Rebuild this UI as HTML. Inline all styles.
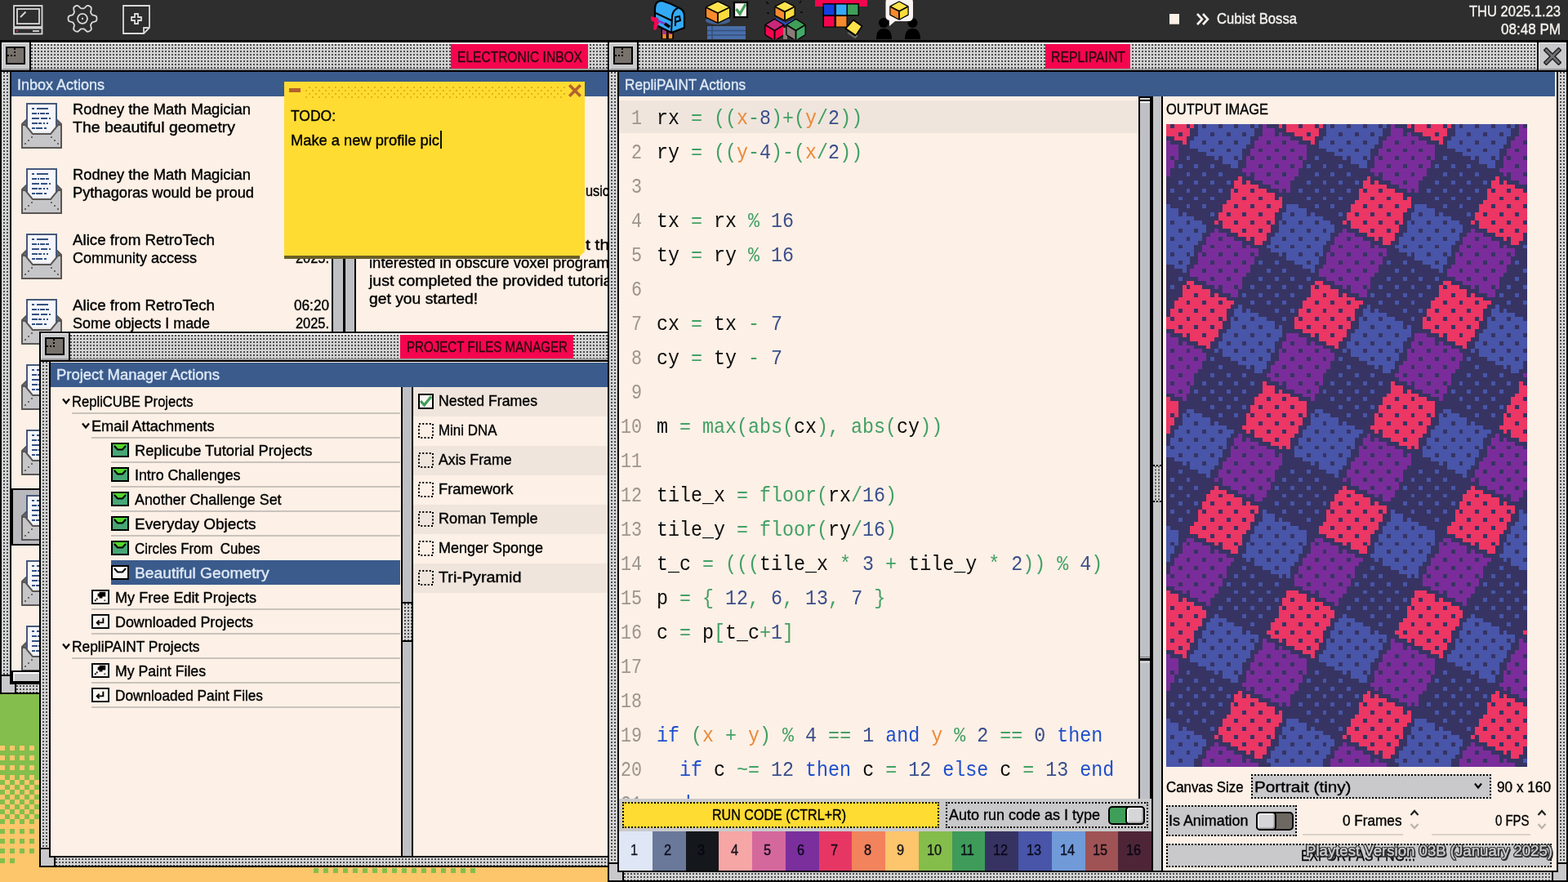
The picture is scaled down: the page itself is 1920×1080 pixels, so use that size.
<!DOCTYPE html>
<html lang="en"><head><meta charset="utf-8"><title>RepliPAINT desktop</title>
<style>
html,body{margin:0;padding:0;background:#2d2d2d;}
body{width:1920px;height:1080px;overflow:hidden;position:relative;font-family:'Liberation Sans',sans-serif;}
#root{position:absolute;left:0;top:0;width:1920px;height:1080px;overflow:hidden;}
#root div,#root span.t,#root svg{position:absolute;box-sizing:border-box;}
#root span.t{white-space:pre;display:block;-webkit-text-stroke:0.4px currentColor;}
#root{filter:blur(0.4px);}
.clip{overflow:hidden;}
</style></head>
<body><div id="root">
<div style="left:0px;top:0px;width:1920px;height:1080px;background:#84be4c;"></div>
<div style="left:0px;top:913px;width:760px;height:36px;background:conic-gradient(from 0deg at 50% 50%, transparent 75%, #fdc66b 0) 0px 0px/12px 12px;"></div>
<div style="left:0px;top:949px;width:760px;height:54px;background:conic-gradient(from 0deg at 50% 50%, #84be4c 25%, #fdc66b 0 50%, #84be4c 0 75%, #fdc66b 0) 0 0/12px 12px;"></div>
<div style="left:0px;top:1003px;width:760px;height:77px;background:#fdc66b;"></div>
<div style="left:0px;top:1003px;width:760px;height:54px;background:conic-gradient(from 0deg at 50% 50%, transparent 50%, #84be4c 0 75%, transparent 0) 0px -6px/12px 12px;"></div>
<div style="left:24px;top:1051px;width:30px;height:6px;background:#fdc66b;"></div>
<div style="left:384px;top:1063px;width:198px;height:6px;background:conic-gradient(from 0deg at 50% 50%, transparent 50%, #84be4c 0 75%, transparent 0) 0px -6px/12px 12px;"></div>
<div style="left:0px;top:50px;width:900px;height:800px;background:#000;"></div>
<div style="left:2px;top:52px;width:896px;height:34px;background:conic-gradient(from 0deg at 50% 50%, #4e4e4e 25%, #d3d3d3 0) 2px 2px/4px 4px;"></div>
<div style="left:2px;top:52px;width:896px;height:1.5px;background:#f4f4f4;"></div>
<div style="left:2px;top:84px;width:896px;height:2px;background:#9a9a9c;"></div>
<div style="left:2px;top:52px;width:34px;height:34px;background:#c9c9cb;border-top:1.5px solid #fff;border-left:1.5px solid #eee;border-bottom:2px solid #9a9a9c;"></div>
<div style="left:36px;top:52px;width:2px;height:34px;background:#000;"></div>
<div style="left:7px;top:57px;width:24px;height:22px;background:#78726c;border:2px solid #000;"></div>
<div style="left:17px;top:59px;width:2px;height:2px;background:#000;"></div>
<div style="left:17px;top:63px;width:2px;height:2px;background:#000;"></div>
<div style="left:17px;top:67px;width:2px;height:2px;background:#000;"></div>
<div style="left:13px;top:67px;width:2px;height:2px;background:#000;"></div>
<div style="left:9px;top:67px;width:2px;height:2px;background:#000;"></div>
<div style="left:552px;top:54px;width:168px;height:30px;background:#f5054e;"></div>
<span class="t" style="left:559.50px;top:60.42px;font-size:19px;line-height:19px;color:#2a0a12;font-family:'Liberation Sans', sans-serif;transform:scale(0.8187,1);transform-origin:0 16.08px;">ELECTRONIC INBOX</span>
<div style="left:2px;top:88px;width:10px;height:760px;background:conic-gradient(from 0deg at 50% 50%, #4e4e4e 25%, #d3d3d3 0) 0px 0px/4px 4px;"></div>
<div style="left:888px;top:88px;width:10px;height:760px;background:conic-gradient(from 0deg at 50% 50%, #4e4e4e 25%, #d3d3d3 0) 0px 0px/4px 4px;"></div>
<div style="left:2px;top:838px;width:896px;height:10px;background:conic-gradient(from 0deg at 50% 50%, #4e4e4e 25%, #d3d3d3 0) 0px 1px/4px 4px;"></div>
<div style="left:12px;top:88px;width:876px;height:750px;background:#000;"></div>
<div style="left:14px;top:88px;width:872px;height:748px;background:#fdf0e6;"></div>
<div style="left:2px;top:826px;width:10px;height:22px;background:#c9c9cb;border-top:2px solid #000;"></div>
<div style="left:2px;top:838px;width:18px;height:10px;background:#c9c9cb;border-right:2px solid #000;"></div>
<div style="left:14px;top:88px;width:886px;height:30px;background:#3a5b8c;"></div>
<span class="t" style="left:21.00px;top:93.92px;font-size:19px;line-height:19px;color:#dfe9f5;font-family:'Liberation Sans', sans-serif;transform:scale(0.9466,1);transform-origin:0 16.08px;">Inbox Actions</span>
<div style="left:14px;top:598px;width:40px;height:70px;background:#b9b9bd;border:2px solid #000;border-right:none;"></div>
<svg style="left:26px;top:126px" width="50" height="56" viewBox="0 0 50 56"><path d="M1 26 L6 21 L44 21 L49 26 L49 55 L1 55 Z" fill="#6c6866" stroke="#5a5654" stroke-width="2"/><rect x="7" y="1" width="36" height="42" fill="#f4f6fb" stroke="#46597c" stroke-width="2"/><rect x="13" y="6" width="3" height="2" fill="#34507f"/><rect x="19" y="6" width="14" height="2" fill="#34507f"/><rect x="13" y="12" width="6" height="2" fill="#34507f"/><rect x="20" y="12" width="2" height="2" fill="#34507f"/><rect x="23" y="12" width="6" height="2" fill="#34507f"/><rect x="30" y="12" width="4" height="2" fill="#34507f"/><rect x="13" y="18" width="9" height="2" fill="#34507f"/><rect x="24" y="18" width="8" height="2" fill="#34507f"/><rect x="34" y="18" width="2" height="2" fill="#34507f"/><rect x="13" y="24" width="7" height="2" fill="#34507f"/><rect x="21" y="24" width="4" height="2" fill="#34507f"/><rect x="27" y="24" width="2" height="2" fill="#34507f"/><rect x="31" y="24" width="2" height="2" fill="#34507f"/><rect x="13" y="30" width="4" height="2" fill="#34507f"/><rect x="18" y="30" width="8" height="2" fill="#34507f"/><rect x="28" y="30" width="3" height="2" fill="#34507f"/><path d="M1 27 L5 27 L14 38 L36 38 L45 27 L49 27 L49 55 L1 55 Z" fill="#c6c6c9" stroke="#5a5654" stroke-width="2" stroke-linejoin="miter"/><path d="M14 36 L36 36" stroke="#e9e9ee" stroke-width="2"/><rect x="12" y="41" width="2" height="2" fill="#6a6664"/><rect x="8" y="45" width="2" height="2" fill="#6a6664"/><rect x="4" y="49" width="2" height="2" fill="#6a6664"/><rect x="36" y="41" width="2" height="2" fill="#6a6664"/><rect x="40" y="45" width="2" height="2" fill="#6a6664"/><rect x="44" y="49" width="2" height="2" fill="#6a6664"/></svg>
<span class="t" style="left:89.00px;top:123.92px;font-size:19px;line-height:19px;color:#000;font-family:'Liberation Sans', sans-serif;transform:scale(0.9645,1);transform-origin:0 16.08px;">Rodney the Math Magician</span>
<span class="t" style="left:89.00px;top:145.92px;font-size:19px;line-height:19px;color:#000;font-family:'Liberation Sans', sans-serif;transform:scale(1.0240,1);transform-origin:0 16.08px;">The beautiful geometry</span>
<svg style="left:26px;top:206px" width="50" height="56" viewBox="0 0 50 56"><path d="M1 26 L6 21 L44 21 L49 26 L49 55 L1 55 Z" fill="#6c6866" stroke="#5a5654" stroke-width="2"/><rect x="7" y="1" width="36" height="42" fill="#f4f6fb" stroke="#46597c" stroke-width="2"/><rect x="13" y="6" width="3" height="2" fill="#34507f"/><rect x="19" y="6" width="14" height="2" fill="#34507f"/><rect x="13" y="12" width="6" height="2" fill="#34507f"/><rect x="20" y="12" width="2" height="2" fill="#34507f"/><rect x="23" y="12" width="6" height="2" fill="#34507f"/><rect x="30" y="12" width="4" height="2" fill="#34507f"/><rect x="13" y="18" width="9" height="2" fill="#34507f"/><rect x="24" y="18" width="8" height="2" fill="#34507f"/><rect x="34" y="18" width="2" height="2" fill="#34507f"/><rect x="13" y="24" width="7" height="2" fill="#34507f"/><rect x="21" y="24" width="4" height="2" fill="#34507f"/><rect x="27" y="24" width="2" height="2" fill="#34507f"/><rect x="31" y="24" width="2" height="2" fill="#34507f"/><rect x="13" y="30" width="4" height="2" fill="#34507f"/><rect x="18" y="30" width="8" height="2" fill="#34507f"/><rect x="28" y="30" width="3" height="2" fill="#34507f"/><path d="M1 27 L5 27 L14 38 L36 38 L45 27 L49 27 L49 55 L1 55 Z" fill="#c6c6c9" stroke="#5a5654" stroke-width="2" stroke-linejoin="miter"/><path d="M14 36 L36 36" stroke="#e9e9ee" stroke-width="2"/><rect x="12" y="41" width="2" height="2" fill="#6a6664"/><rect x="8" y="45" width="2" height="2" fill="#6a6664"/><rect x="4" y="49" width="2" height="2" fill="#6a6664"/><rect x="36" y="41" width="2" height="2" fill="#6a6664"/><rect x="40" y="45" width="2" height="2" fill="#6a6664"/><rect x="44" y="49" width="2" height="2" fill="#6a6664"/></svg>
<span class="t" style="left:89.00px;top:203.92px;font-size:19px;line-height:19px;color:#000;font-family:'Liberation Sans', sans-serif;transform:scale(0.9645,1);transform-origin:0 16.08px;">Rodney the Math Magician</span>
<span class="t" style="left:89.00px;top:225.92px;font-size:19px;line-height:19px;color:#000;font-family:'Liberation Sans', sans-serif;transform:scale(0.9597,1);transform-origin:0 16.08px;">Pythagoras would be proud</span>
<svg style="left:26px;top:286px" width="50" height="56" viewBox="0 0 50 56"><path d="M1 26 L6 21 L44 21 L49 26 L49 55 L1 55 Z" fill="#6c6866" stroke="#5a5654" stroke-width="2"/><rect x="7" y="1" width="36" height="42" fill="#f4f6fb" stroke="#46597c" stroke-width="2"/><rect x="13" y="6" width="3" height="2" fill="#34507f"/><rect x="19" y="6" width="14" height="2" fill="#34507f"/><rect x="13" y="12" width="6" height="2" fill="#34507f"/><rect x="20" y="12" width="2" height="2" fill="#34507f"/><rect x="23" y="12" width="6" height="2" fill="#34507f"/><rect x="30" y="12" width="4" height="2" fill="#34507f"/><rect x="13" y="18" width="9" height="2" fill="#34507f"/><rect x="24" y="18" width="8" height="2" fill="#34507f"/><rect x="34" y="18" width="2" height="2" fill="#34507f"/><rect x="13" y="24" width="7" height="2" fill="#34507f"/><rect x="21" y="24" width="4" height="2" fill="#34507f"/><rect x="27" y="24" width="2" height="2" fill="#34507f"/><rect x="31" y="24" width="2" height="2" fill="#34507f"/><rect x="13" y="30" width="4" height="2" fill="#34507f"/><rect x="18" y="30" width="8" height="2" fill="#34507f"/><rect x="28" y="30" width="3" height="2" fill="#34507f"/><path d="M1 27 L5 27 L14 38 L36 38 L45 27 L49 27 L49 55 L1 55 Z" fill="#c6c6c9" stroke="#5a5654" stroke-width="2" stroke-linejoin="miter"/><path d="M14 36 L36 36" stroke="#e9e9ee" stroke-width="2"/><rect x="12" y="41" width="2" height="2" fill="#6a6664"/><rect x="8" y="45" width="2" height="2" fill="#6a6664"/><rect x="4" y="49" width="2" height="2" fill="#6a6664"/><rect x="36" y="41" width="2" height="2" fill="#6a6664"/><rect x="40" y="45" width="2" height="2" fill="#6a6664"/><rect x="44" y="49" width="2" height="2" fill="#6a6664"/></svg>
<span class="t" style="left:89.00px;top:283.92px;font-size:19px;line-height:19px;color:#000;font-family:'Liberation Sans', sans-serif;transform:scale(0.9867,1);transform-origin:0 16.08px;">Alice from RetroTech</span>
<span class="t" style="left:89.00px;top:305.92px;font-size:19px;line-height:19px;color:#000;font-family:'Liberation Sans', sans-serif;transform:scale(0.9470,1);transform-origin:0 16.08px;">Community access</span>
<span class="t" style="left:359.50px;top:283.92px;font-size:19px;line-height:19px;color:#000;font-family:'Liberation Sans', sans-serif;transform:scale(0.9044,1);transform-origin:0 16.08px;">06:20</span>
<span class="t" style="left:361.50px;top:305.92px;font-size:19px;line-height:19px;color:#000;font-family:'Liberation Sans', sans-serif;transform:scale(0.8623,1);transform-origin:0 16.08px;">2025.</span>
<svg style="left:26px;top:366px" width="50" height="56" viewBox="0 0 50 56"><path d="M1 26 L6 21 L44 21 L49 26 L49 55 L1 55 Z" fill="#6c6866" stroke="#5a5654" stroke-width="2"/><rect x="7" y="1" width="36" height="42" fill="#f4f6fb" stroke="#46597c" stroke-width="2"/><rect x="13" y="6" width="3" height="2" fill="#34507f"/><rect x="19" y="6" width="14" height="2" fill="#34507f"/><rect x="13" y="12" width="6" height="2" fill="#34507f"/><rect x="20" y="12" width="2" height="2" fill="#34507f"/><rect x="23" y="12" width="6" height="2" fill="#34507f"/><rect x="30" y="12" width="4" height="2" fill="#34507f"/><rect x="13" y="18" width="9" height="2" fill="#34507f"/><rect x="24" y="18" width="8" height="2" fill="#34507f"/><rect x="34" y="18" width="2" height="2" fill="#34507f"/><rect x="13" y="24" width="7" height="2" fill="#34507f"/><rect x="21" y="24" width="4" height="2" fill="#34507f"/><rect x="27" y="24" width="2" height="2" fill="#34507f"/><rect x="31" y="24" width="2" height="2" fill="#34507f"/><rect x="13" y="30" width="4" height="2" fill="#34507f"/><rect x="18" y="30" width="8" height="2" fill="#34507f"/><rect x="28" y="30" width="3" height="2" fill="#34507f"/><path d="M1 27 L5 27 L14 38 L36 38 L45 27 L49 27 L49 55 L1 55 Z" fill="#c6c6c9" stroke="#5a5654" stroke-width="2" stroke-linejoin="miter"/><path d="M14 36 L36 36" stroke="#e9e9ee" stroke-width="2"/><rect x="12" y="41" width="2" height="2" fill="#6a6664"/><rect x="8" y="45" width="2" height="2" fill="#6a6664"/><rect x="4" y="49" width="2" height="2" fill="#6a6664"/><rect x="36" y="41" width="2" height="2" fill="#6a6664"/><rect x="40" y="45" width="2" height="2" fill="#6a6664"/><rect x="44" y="49" width="2" height="2" fill="#6a6664"/></svg>
<span class="t" style="left:89.00px;top:363.92px;font-size:19px;line-height:19px;color:#000;font-family:'Liberation Sans', sans-serif;transform:scale(0.9867,1);transform-origin:0 16.08px;">Alice from RetroTech</span>
<span class="t" style="left:89.00px;top:385.92px;font-size:19px;line-height:19px;color:#000;font-family:'Liberation Sans', sans-serif;transform:scale(0.9413,1);transform-origin:0 16.08px;">Some objects I made</span>
<span class="t" style="left:359.50px;top:363.92px;font-size:19px;line-height:19px;color:#000;font-family:'Liberation Sans', sans-serif;transform:scale(0.9044,1);transform-origin:0 16.08px;">06:20</span>
<span class="t" style="left:361.50px;top:385.92px;font-size:19px;line-height:19px;color:#000;font-family:'Liberation Sans', sans-serif;transform:scale(0.8623,1);transform-origin:0 16.08px;">2025.</span>
<svg style="left:26px;top:446px" width="50" height="56" viewBox="0 0 50 56"><path d="M1 26 L6 21 L44 21 L49 26 L49 55 L1 55 Z" fill="#6c6866" stroke="#5a5654" stroke-width="2"/><rect x="7" y="1" width="36" height="42" fill="#f4f6fb" stroke="#46597c" stroke-width="2"/><rect x="13" y="6" width="3" height="2" fill="#34507f"/><rect x="19" y="6" width="14" height="2" fill="#34507f"/><rect x="13" y="12" width="6" height="2" fill="#34507f"/><rect x="20" y="12" width="2" height="2" fill="#34507f"/><rect x="23" y="12" width="6" height="2" fill="#34507f"/><rect x="30" y="12" width="4" height="2" fill="#34507f"/><rect x="13" y="18" width="9" height="2" fill="#34507f"/><rect x="24" y="18" width="8" height="2" fill="#34507f"/><rect x="34" y="18" width="2" height="2" fill="#34507f"/><rect x="13" y="24" width="7" height="2" fill="#34507f"/><rect x="21" y="24" width="4" height="2" fill="#34507f"/><rect x="27" y="24" width="2" height="2" fill="#34507f"/><rect x="31" y="24" width="2" height="2" fill="#34507f"/><rect x="13" y="30" width="4" height="2" fill="#34507f"/><rect x="18" y="30" width="8" height="2" fill="#34507f"/><rect x="28" y="30" width="3" height="2" fill="#34507f"/><path d="M1 27 L5 27 L14 38 L36 38 L45 27 L49 27 L49 55 L1 55 Z" fill="#c6c6c9" stroke="#5a5654" stroke-width="2" stroke-linejoin="miter"/><path d="M14 36 L36 36" stroke="#e9e9ee" stroke-width="2"/><rect x="12" y="41" width="2" height="2" fill="#6a6664"/><rect x="8" y="45" width="2" height="2" fill="#6a6664"/><rect x="4" y="49" width="2" height="2" fill="#6a6664"/><rect x="36" y="41" width="2" height="2" fill="#6a6664"/><rect x="40" y="45" width="2" height="2" fill="#6a6664"/><rect x="44" y="49" width="2" height="2" fill="#6a6664"/></svg>
<svg style="left:26px;top:526px" width="50" height="56" viewBox="0 0 50 56"><path d="M1 26 L6 21 L44 21 L49 26 L49 55 L1 55 Z" fill="#6c6866" stroke="#5a5654" stroke-width="2"/><rect x="7" y="1" width="36" height="42" fill="#f4f6fb" stroke="#46597c" stroke-width="2"/><rect x="13" y="6" width="3" height="2" fill="#34507f"/><rect x="19" y="6" width="14" height="2" fill="#34507f"/><rect x="13" y="12" width="6" height="2" fill="#34507f"/><rect x="20" y="12" width="2" height="2" fill="#34507f"/><rect x="23" y="12" width="6" height="2" fill="#34507f"/><rect x="30" y="12" width="4" height="2" fill="#34507f"/><rect x="13" y="18" width="9" height="2" fill="#34507f"/><rect x="24" y="18" width="8" height="2" fill="#34507f"/><rect x="34" y="18" width="2" height="2" fill="#34507f"/><rect x="13" y="24" width="7" height="2" fill="#34507f"/><rect x="21" y="24" width="4" height="2" fill="#34507f"/><rect x="27" y="24" width="2" height="2" fill="#34507f"/><rect x="31" y="24" width="2" height="2" fill="#34507f"/><rect x="13" y="30" width="4" height="2" fill="#34507f"/><rect x="18" y="30" width="8" height="2" fill="#34507f"/><rect x="28" y="30" width="3" height="2" fill="#34507f"/><path d="M1 27 L5 27 L14 38 L36 38 L45 27 L49 27 L49 55 L1 55 Z" fill="#c6c6c9" stroke="#5a5654" stroke-width="2" stroke-linejoin="miter"/><path d="M14 36 L36 36" stroke="#e9e9ee" stroke-width="2"/><rect x="12" y="41" width="2" height="2" fill="#6a6664"/><rect x="8" y="45" width="2" height="2" fill="#6a6664"/><rect x="4" y="49" width="2" height="2" fill="#6a6664"/><rect x="36" y="41" width="2" height="2" fill="#6a6664"/><rect x="40" y="45" width="2" height="2" fill="#6a6664"/><rect x="44" y="49" width="2" height="2" fill="#6a6664"/></svg>
<svg style="left:26px;top:606px" width="50" height="56" viewBox="0 0 50 56"><path d="M1 26 L6 21 L44 21 L49 26 L49 55 L1 55 Z" fill="#6c6866" stroke="#5a5654" stroke-width="2"/><rect x="7" y="1" width="36" height="42" fill="#f4f6fb" stroke="#46597c" stroke-width="2"/><rect x="13" y="6" width="3" height="2" fill="#34507f"/><rect x="19" y="6" width="14" height="2" fill="#34507f"/><rect x="13" y="12" width="6" height="2" fill="#34507f"/><rect x="20" y="12" width="2" height="2" fill="#34507f"/><rect x="23" y="12" width="6" height="2" fill="#34507f"/><rect x="30" y="12" width="4" height="2" fill="#34507f"/><rect x="13" y="18" width="9" height="2" fill="#34507f"/><rect x="24" y="18" width="8" height="2" fill="#34507f"/><rect x="34" y="18" width="2" height="2" fill="#34507f"/><rect x="13" y="24" width="7" height="2" fill="#34507f"/><rect x="21" y="24" width="4" height="2" fill="#34507f"/><rect x="27" y="24" width="2" height="2" fill="#34507f"/><rect x="31" y="24" width="2" height="2" fill="#34507f"/><rect x="13" y="30" width="4" height="2" fill="#34507f"/><rect x="18" y="30" width="8" height="2" fill="#34507f"/><rect x="28" y="30" width="3" height="2" fill="#34507f"/><path d="M1 27 L5 27 L14 38 L36 38 L45 27 L49 27 L49 55 L1 55 Z" fill="#c6c6c9" stroke="#5a5654" stroke-width="2" stroke-linejoin="miter"/><path d="M14 36 L36 36" stroke="#e9e9ee" stroke-width="2"/><rect x="12" y="41" width="2" height="2" fill="#6a6664"/><rect x="8" y="45" width="2" height="2" fill="#6a6664"/><rect x="4" y="49" width="2" height="2" fill="#6a6664"/><rect x="36" y="41" width="2" height="2" fill="#6a6664"/><rect x="40" y="45" width="2" height="2" fill="#6a6664"/><rect x="44" y="49" width="2" height="2" fill="#6a6664"/></svg>
<svg style="left:26px;top:686px" width="50" height="56" viewBox="0 0 50 56"><path d="M1 26 L6 21 L44 21 L49 26 L49 55 L1 55 Z" fill="#6c6866" stroke="#5a5654" stroke-width="2"/><rect x="7" y="1" width="36" height="42" fill="#f4f6fb" stroke="#46597c" stroke-width="2"/><rect x="13" y="6" width="3" height="2" fill="#34507f"/><rect x="19" y="6" width="14" height="2" fill="#34507f"/><rect x="13" y="12" width="6" height="2" fill="#34507f"/><rect x="20" y="12" width="2" height="2" fill="#34507f"/><rect x="23" y="12" width="6" height="2" fill="#34507f"/><rect x="30" y="12" width="4" height="2" fill="#34507f"/><rect x="13" y="18" width="9" height="2" fill="#34507f"/><rect x="24" y="18" width="8" height="2" fill="#34507f"/><rect x="34" y="18" width="2" height="2" fill="#34507f"/><rect x="13" y="24" width="7" height="2" fill="#34507f"/><rect x="21" y="24" width="4" height="2" fill="#34507f"/><rect x="27" y="24" width="2" height="2" fill="#34507f"/><rect x="31" y="24" width="2" height="2" fill="#34507f"/><rect x="13" y="30" width="4" height="2" fill="#34507f"/><rect x="18" y="30" width="8" height="2" fill="#34507f"/><rect x="28" y="30" width="3" height="2" fill="#34507f"/><path d="M1 27 L5 27 L14 38 L36 38 L45 27 L49 27 L49 55 L1 55 Z" fill="#c6c6c9" stroke="#5a5654" stroke-width="2" stroke-linejoin="miter"/><path d="M14 36 L36 36" stroke="#e9e9ee" stroke-width="2"/><rect x="12" y="41" width="2" height="2" fill="#6a6664"/><rect x="8" y="45" width="2" height="2" fill="#6a6664"/><rect x="4" y="49" width="2" height="2" fill="#6a6664"/><rect x="36" y="41" width="2" height="2" fill="#6a6664"/><rect x="40" y="45" width="2" height="2" fill="#6a6664"/><rect x="44" y="49" width="2" height="2" fill="#6a6664"/></svg>
<svg style="left:26px;top:766px" width="50" height="56" viewBox="0 0 50 56"><path d="M1 26 L6 21 L44 21 L49 26 L49 55 L1 55 Z" fill="#6c6866" stroke="#5a5654" stroke-width="2"/><rect x="7" y="1" width="36" height="42" fill="#f4f6fb" stroke="#46597c" stroke-width="2"/><rect x="13" y="6" width="3" height="2" fill="#34507f"/><rect x="19" y="6" width="14" height="2" fill="#34507f"/><rect x="13" y="12" width="6" height="2" fill="#34507f"/><rect x="20" y="12" width="2" height="2" fill="#34507f"/><rect x="23" y="12" width="6" height="2" fill="#34507f"/><rect x="30" y="12" width="4" height="2" fill="#34507f"/><rect x="13" y="18" width="9" height="2" fill="#34507f"/><rect x="24" y="18" width="8" height="2" fill="#34507f"/><rect x="34" y="18" width="2" height="2" fill="#34507f"/><rect x="13" y="24" width="7" height="2" fill="#34507f"/><rect x="21" y="24" width="4" height="2" fill="#34507f"/><rect x="27" y="24" width="2" height="2" fill="#34507f"/><rect x="31" y="24" width="2" height="2" fill="#34507f"/><rect x="13" y="30" width="4" height="2" fill="#34507f"/><rect x="18" y="30" width="8" height="2" fill="#34507f"/><rect x="28" y="30" width="3" height="2" fill="#34507f"/><path d="M1 27 L5 27 L14 38 L36 38 L45 27 L49 27 L49 55 L1 55 Z" fill="#c6c6c9" stroke="#5a5654" stroke-width="2" stroke-linejoin="miter"/><path d="M14 36 L36 36" stroke="#e9e9ee" stroke-width="2"/><rect x="12" y="41" width="2" height="2" fill="#6a6664"/><rect x="8" y="45" width="2" height="2" fill="#6a6664"/><rect x="4" y="49" width="2" height="2" fill="#6a6664"/><rect x="36" y="41" width="2" height="2" fill="#6a6664"/><rect x="40" y="45" width="2" height="2" fill="#6a6664"/><rect x="44" y="49" width="2" height="2" fill="#6a6664"/></svg>
<div style="left:406px;top:118px;width:2px;height:720px;background:#000;"></div>
<div style="left:408px;top:118px;width:12px;height:720px;background:#bfc0c4;"></div>
<div style="left:420px;top:118px;width:3px;height:720px;background:#000;"></div>
<div style="left:423px;top:118px;width:11px;height:720px;background:#bfc0c4;"></div>
<div style="left:434px;top:118px;width:2px;height:720px;background:#000;"></div>
<span class="t" style="left:717.00px;top:224.12px;font-size:19px;line-height:19px;color:#000;font-family:'Liberation Sans', sans-serif;transform:scale(0.8581,1);transform-origin:0 16.08px;">usic</span>
<span class="t" style="left:717.00px;top:290.12px;font-size:19px;line-height:19px;color:#000;font-family:'Liberation Sans', sans-serif;transform:scale(1.0982,1);transform-origin:0 16.08px;">t th</span>
<span class="t" style="left:451.50px;top:312.42px;font-size:19px;line-height:19px;color:#000;font-family:'Liberation Sans', sans-serif;transform:scale(0.9731,1);transform-origin:0 16.08px;">interested in obscure voxel programming</span>
<span class="t" style="left:451.50px;top:334.42px;font-size:19px;line-height:19px;color:#000;font-family:'Liberation Sans', sans-serif;transform:scale(1.0249,1);transform-origin:0 16.08px;">just completed the provided tutorial</span>
<span class="t" style="left:451.50px;top:356.42px;font-size:19px;line-height:19px;color:#000;font-family:'Liberation Sans', sans-serif;transform:scale(1.0155,1);transform-origin:0 16.08px;">get you started!</span>
<div style="left:14px;top:821px;width:886px;height:17px;background:#000;"></div>
<div style="left:16px;top:823px;width:120px;height:11px;background:#c9c9cb;border-top:2px solid #fff;border-left:2px solid #eee;"></div>
<div style="left:50px;top:823px;width:850px;height:11px;background:#bfc0c4;"></div>
<div style="left:348px;top:103px;width:362px;height:213.5px;background:#6b5f25;"></div>
<div style="left:348px;top:100px;width:368px;height:213px;background:#ffdc32;clip-path:polygon(0 0,100% 0,100% 208px,363px 100%,0 100%);"></div>
<div style="left:372px;top:106px;width:320px;height:14.5px;background:conic-gradient(from 0deg at 6px 2px, #e2b412 25%, transparent 0) 0 0/8px 8px, conic-gradient(from 0deg at 6px 2px, #e2b412 25%, transparent 0) -4px 4px/8px 8px;"></div>
<div style="left:354px;top:108px;width:14px;height:5px;background:#b4612c;"></div>
<svg style="left:696px;top:103px" width="16" height="16" viewBox="0 0 16 16"><path d="M2.5 2.5L13.5 13.5M13.5 2.5L2.5 13.5" stroke="#b4612c" stroke-width="3.6" stroke-linecap="square"/></svg>
<span class="t" style="left:356.00px;top:131.92px;font-size:19px;line-height:19px;color:#000;font-family:'Liberation Sans', sans-serif;transform:scale(0.9193,1);transform-origin:0 16.08px;">TODO:</span>
<span class="t" style="left:356.00px;top:161.92px;font-size:19px;line-height:19px;color:#000;font-family:'Liberation Sans', sans-serif;transform:scale(0.9627,1);transform-origin:0 16.08px;">Make a new profile pic</span>
<div style="left:539px;top:160px;width:1.6px;height:22px;background:#111;"></div>
<div style="left:48px;top:406px;width:852px;height:656px;background:#000;"></div>
<div style="left:50px;top:408px;width:848px;height:33px;background:conic-gradient(from 0deg at 50% 50%, #4e4e4e 25%, #d3d3d3 0) 2px 2px/4px 4px;"></div>
<div style="left:50px;top:408px;width:848px;height:1.5px;background:#f4f4f4;"></div>
<div style="left:50px;top:439px;width:848px;height:2px;background:#9a9a9c;"></div>
<div style="left:50px;top:408px;width:34px;height:33px;background:#c9c9cb;border-top:1.5px solid #fff;border-left:1.5px solid #eee;border-bottom:2px solid #9a9a9c;"></div>
<div style="left:84px;top:408px;width:2px;height:33px;background:#000;"></div>
<div style="left:55px;top:413px;width:24px;height:22px;background:#78726c;border:2px solid #000;"></div>
<div style="left:65px;top:415px;width:2px;height:2px;background:#000;"></div>
<div style="left:65px;top:419px;width:2px;height:2px;background:#000;"></div>
<div style="left:65px;top:423px;width:2px;height:2px;background:#000;"></div>
<div style="left:61px;top:423px;width:2px;height:2px;background:#000;"></div>
<div style="left:57px;top:423px;width:2px;height:2px;background:#000;"></div>
<div style="left:490px;top:410px;width:212px;height:29px;background:#f5054e;"></div>
<span class="t" style="left:497.50px;top:415.42px;font-size:19px;line-height:19px;color:#2a0a12;font-family:'Liberation Sans', sans-serif;transform:scale(0.7951,1);transform-origin:0 16.08px;">PROJECT FILES MANAGER</span>
<div style="left:50px;top:443px;width:10px;height:617px;background:conic-gradient(from 0deg at 50% 50%, #4e4e4e 25%, #d3d3d3 0) 0px 0px/4px 4px;"></div>
<div style="left:888px;top:443px;width:10px;height:617px;background:conic-gradient(from 0deg at 50% 50%, #4e4e4e 25%, #d3d3d3 0) 0px 0px/4px 4px;"></div>
<div style="left:50px;top:1050px;width:848px;height:10px;background:conic-gradient(from 0deg at 50% 50%, #4e4e4e 25%, #d3d3d3 0) 0px 1px/4px 4px;"></div>
<div style="left:60px;top:443px;width:828px;height:607px;background:#000;"></div>
<div style="left:62px;top:443px;width:824px;height:605px;background:#fdf0e6;"></div>
<div style="left:50px;top:1038px;width:10px;height:22px;background:#c9c9cb;border-top:2px solid #000;"></div>
<div style="left:50px;top:1050px;width:18px;height:10px;background:#c9c9cb;border-right:2px solid #000;"></div>
<div style="left:62px;top:443.5px;width:838px;height:30px;background:#3a5b8c;"></div>
<span class="t" style="left:69.00px;top:449.42px;font-size:19px;line-height:19px;color:#dfe9f5;font-family:'Liberation Sans', sans-serif;transform:scale(0.9711,1);transform-origin:0 16.08px;">Project Manager Actions</span>
<div style="left:62px;top:473.5px;width:838px;height:574.5px;background:#fdf0e6;"></div>
<svg style="left:76px;top:486.5px" width="10" height="9" viewBox="0 0 10 9"><path d="M1 1.5 L5 6.5 L9 1.5" fill="none" stroke="#000" stroke-width="2.2"/></svg>
<span class="t" style="left:88.00px;top:481.92px;font-size:19px;line-height:19px;color:#000;font-family:'Liberation Sans', sans-serif;transform:scale(0.8735,1);transform-origin:0 16.08px;">RepliCUBE Projects</span>
<div style="left:88px;top:504.8px;width:402px;height:2px;background:#c9c3bd;"></div>
<svg style="left:100px;top:516.5px" width="10" height="9" viewBox="0 0 10 9"><path d="M1 1.5 L5 6.5 L9 1.5" fill="none" stroke="#000" stroke-width="2.2"/></svg>
<span class="t" style="left:112.00px;top:511.92px;font-size:19px;line-height:19px;color:#000;font-family:'Liberation Sans', sans-serif;transform:scale(0.9565,1);transform-origin:0 16.08px;">Email Attachments</span>
<div style="left:112px;top:534.8px;width:378px;height:2px;background:#c9c3bd;"></div>
<svg style="left:136px;top:541.8px" width="22" height="18" viewBox="0 0 22 18"><rect x="1" y="1" width="20" height="16" fill="#48a676" stroke="#000" stroke-width="2"/><path d="M4 2 L18 2 L18 4 L14 8.5 L8 8.5 L4 4 Z" fill="#52d62c"/><path d="M4 4 L8 8.5 L14 8.5 L18 4" fill="none" stroke="#000" stroke-width="2"/></svg>
<span class="t" style="left:164.70px;top:541.92px;font-size:19px;line-height:19px;color:#000;font-family:'Liberation Sans', sans-serif;transform:scale(0.9624,1);transform-origin:0 16.08px;">Replicube Tutorial Projects</span>
<div style="left:136px;top:564.8px;width:354px;height:2px;background:#c9c3bd;"></div>
<svg style="left:136px;top:571.8px" width="22" height="18" viewBox="0 0 22 18"><rect x="1" y="1" width="20" height="16" fill="#48a676" stroke="#000" stroke-width="2"/><path d="M4 2 L18 2 L18 4 L14 8.5 L8 8.5 L4 4 Z" fill="#52d62c"/><path d="M4 4 L8 8.5 L14 8.5 L18 4" fill="none" stroke="#000" stroke-width="2"/></svg>
<span class="t" style="left:164.70px;top:571.92px;font-size:19px;line-height:19px;color:#000;font-family:'Liberation Sans', sans-serif;transform:scale(0.9359,1);transform-origin:0 16.08px;">Intro Challenges</span>
<div style="left:136px;top:594.8px;width:354px;height:2px;background:#c9c3bd;"></div>
<svg style="left:136px;top:601.8px" width="22" height="18" viewBox="0 0 22 18"><rect x="1" y="1" width="20" height="16" fill="#48a676" stroke="#000" stroke-width="2"/><path d="M4 2 L18 2 L18 4 L14 8.5 L8 8.5 L4 4 Z" fill="#52d62c"/><path d="M4 4 L8 8.5 L14 8.5 L18 4" fill="none" stroke="#000" stroke-width="2"/></svg>
<span class="t" style="left:164.70px;top:601.92px;font-size:19px;line-height:19px;color:#000;font-family:'Liberation Sans', sans-serif;transform:scale(0.9389,1);transform-origin:0 16.08px;">Another Challenge Set</span>
<div style="left:136px;top:624.8px;width:354px;height:2px;background:#c9c3bd;"></div>
<svg style="left:136px;top:631.8px" width="22" height="18" viewBox="0 0 22 18"><rect x="1" y="1" width="20" height="16" fill="#48a676" stroke="#000" stroke-width="2"/><path d="M4 2 L18 2 L18 4 L14 8.5 L8 8.5 L4 4 Z" fill="#52d62c"/><path d="M4 4 L8 8.5 L14 8.5 L18 4" fill="none" stroke="#000" stroke-width="2"/></svg>
<span class="t" style="left:164.70px;top:631.92px;font-size:19px;line-height:19px;color:#000;font-family:'Liberation Sans', sans-serif;transform:scale(0.9973,1);transform-origin:0 16.08px;">Everyday Objects</span>
<div style="left:136px;top:654.8px;width:354px;height:2px;background:#c9c3bd;"></div>
<svg style="left:136px;top:661.8px" width="22" height="18" viewBox="0 0 22 18"><rect x="1" y="1" width="20" height="16" fill="#48a676" stroke="#000" stroke-width="2"/><path d="M4 2 L18 2 L18 4 L14 8.5 L8 8.5 L4 4 Z" fill="#52d62c"/><path d="M4 4 L8 8.5 L14 8.5 L18 4" fill="none" stroke="#000" stroke-width="2"/></svg>
<span class="t" style="left:164.70px;top:661.92px;font-size:19px;line-height:19px;color:#000;font-family:'Liberation Sans', sans-serif;transform:scale(0.8865,1);transform-origin:0 16.08px;">Circles From  Cubes</span>
<div style="left:136px;top:685.5px;width:354px;height:30.5px;background:#3a5b8c;"></div>
<svg style="left:136px;top:691.8px" width="22" height="18" viewBox="0 0 22 18"><rect x="1" y="1" width="20" height="16" fill="#f4f4f4" stroke="#000" stroke-width="2"/><path d="M4 2 L18 2 L18 4 L14 8.5 L8 8.5 L4 4 Z" fill="#ffffff"/><path d="M4 4 L8 8.5 L14 8.5 L18 4" fill="none" stroke="#000" stroke-width="2"/></svg>
<span class="t" style="left:164.70px;top:691.92px;font-size:19px;line-height:19px;color:#dfe9f5;font-family:'Liberation Sans', sans-serif;transform:scale(1.0114,1);transform-origin:0 16.08px;">Beautiful Geometry</span>
<svg style="left:112px;top:721.8px" width="22" height="18" viewBox="0 0 23 19" preserveAspectRatio="none"><rect x="1" y="1" width="21" height="17" fill="#fdf6f0" stroke="#000" stroke-width="2"/><path d="M10 3 L18 3 L18 9 L14 9 L14 11 L10 11 L10 9 L8 9 L8 5 L10 5 Z" fill="#000"/><rect x="6" y="11" width="2" height="2" fill="#000"/><rect x="4" y="13" width="2" height="2" fill="#000"/><rect x="16" y="13" width="2" height="2" fill="#555"/></svg>
<span class="t" style="left:140.50px;top:721.92px;font-size:19px;line-height:19px;color:#000;font-family:'Liberation Sans', sans-serif;transform:scale(0.9526,1);transform-origin:0 16.08px;">My Free Edit Projects</span>
<div style="left:112px;top:744.8px;width:378px;height:2px;background:#c9c3bd;"></div>
<svg style="left:112px;top:751.8px" width="22" height="18" viewBox="0 0 23 19" preserveAspectRatio="none"><rect x="1" y="1" width="21" height="17" fill="#fdf6f0" stroke="#000" stroke-width="2"/><path d="M15 5 L15 11 L8 11" fill="none" stroke="#000" stroke-width="2"/><path d="M10 8 L7 11 L10 14" fill="none" stroke="#000" stroke-width="2"/></svg>
<span class="t" style="left:140.50px;top:751.92px;font-size:19px;line-height:19px;color:#000;font-family:'Liberation Sans', sans-serif;transform:scale(0.9413,1);transform-origin:0 16.08px;">Downloaded Projects</span>
<div style="left:112px;top:774.8px;width:378px;height:2px;background:#c9c3bd;"></div>
<svg style="left:76px;top:786.5px" width="10" height="9" viewBox="0 0 10 9"><path d="M1 1.5 L5 6.5 L9 1.5" fill="none" stroke="#000" stroke-width="2.2"/></svg>
<span class="t" style="left:88.00px;top:781.92px;font-size:19px;line-height:19px;color:#000;font-family:'Liberation Sans', sans-serif;transform:scale(0.9130,1);transform-origin:0 16.08px;">RepliPAINT Projects</span>
<div style="left:88px;top:804.8px;width:402px;height:2px;background:#c9c3bd;"></div>
<svg style="left:112px;top:811.8px" width="22" height="18" viewBox="0 0 23 19" preserveAspectRatio="none"><rect x="1" y="1" width="21" height="17" fill="#fdf6f0" stroke="#000" stroke-width="2"/><path d="M10 3 L18 3 L18 9 L14 9 L14 11 L10 11 L10 9 L8 9 L8 5 L10 5 Z" fill="#000"/><rect x="6" y="11" width="2" height="2" fill="#000"/><rect x="4" y="13" width="2" height="2" fill="#000"/><rect x="16" y="13" width="2" height="2" fill="#555"/></svg>
<span class="t" style="left:140.50px;top:811.92px;font-size:19px;line-height:19px;color:#000;font-family:'Liberation Sans', sans-serif;transform:scale(0.9303,1);transform-origin:0 16.08px;">My Paint Files</span>
<div style="left:112px;top:834.8px;width:378px;height:2px;background:#c9c3bd;"></div>
<svg style="left:112px;top:841.8px" width="22" height="18" viewBox="0 0 23 19" preserveAspectRatio="none"><rect x="1" y="1" width="21" height="17" fill="#fdf6f0" stroke="#000" stroke-width="2"/><path d="M15 5 L15 11 L8 11" fill="none" stroke="#000" stroke-width="2"/><path d="M10 8 L7 11 L10 14" fill="none" stroke="#000" stroke-width="2"/></svg>
<span class="t" style="left:140.50px;top:841.92px;font-size:19px;line-height:19px;color:#000;font-family:'Liberation Sans', sans-serif;transform:scale(0.9067,1);transform-origin:0 16.08px;">Downloaded Paint Files</span>
<div style="left:112px;top:864.8px;width:378px;height:2px;background:#c9c3bd;"></div>
<div style="left:490.5px;top:473.5px;width:2px;height:574.5px;background:#000;"></div>
<div style="left:492.5px;top:473.5px;width:11.5px;height:574.5px;background:#bfc0c4;"></div>
<div style="left:492.5px;top:738px;width:11.5px;height:46px;background:conic-gradient(from 0deg at 50% 50%, #4e4e4e 25%, #d3d3d3 0) 0px 1px/4px 4px;"></div>
<div style="left:492.5px;top:737px;width:11.5px;height:1.5px;background:#000;"></div>
<div style="left:492.5px;top:784px;width:11.5px;height:1.5px;background:#000;"></div>
<div style="left:504px;top:473.5px;width:2px;height:574.5px;background:#000;"></div>
<div style="left:506px;top:473.5px;width:394px;height:36px;background:#efe5dc;"></div>
<svg style="left:511.5px;top:482.0px" width="19" height="19" viewBox="0 0 19 19"><rect x="1" y="1" width="17" height="17" fill="#fbf6f2" stroke="#000" stroke-width="2"/><path d="M3 9 L7.5 14 L16 3.5" fill="none" stroke="#3f9e59" stroke-width="3.2"/></svg>
<span class="t" style="left:537.00px;top:481.42px;font-size:19px;line-height:19px;color:#000;font-family:'Liberation Sans', sans-serif;transform:scale(0.9317,1);transform-origin:0 16.08px;">Nested Frames</span>
<svg style="left:511.5px;top:518.0px" width="19" height="19" viewBox="0 0 19 19"><rect x="1" y="1" width="17" height="17" fill="none" stroke="#000" stroke-width="2" stroke-dasharray="2 2.25"/></svg>
<span class="t" style="left:537.00px;top:517.42px;font-size:19px;line-height:19px;color:#000;font-family:'Liberation Sans', sans-serif;transform:scale(0.8911,1);transform-origin:0 16.08px;">Mini DNA</span>
<div style="left:506px;top:545.5px;width:394px;height:36px;background:#efe5dc;"></div>
<svg style="left:511.5px;top:554.0px" width="19" height="19" viewBox="0 0 19 19"><rect x="1" y="1" width="17" height="17" fill="none" stroke="#000" stroke-width="2" stroke-dasharray="2 2.25"/></svg>
<span class="t" style="left:537.00px;top:553.42px;font-size:19px;line-height:19px;color:#000;font-family:'Liberation Sans', sans-serif;transform:scale(0.9315,1);transform-origin:0 16.08px;">Axis Frame</span>
<svg style="left:511.5px;top:590.0px" width="19" height="19" viewBox="0 0 19 19"><rect x="1" y="1" width="17" height="17" fill="none" stroke="#000" stroke-width="2" stroke-dasharray="2 2.25"/></svg>
<span class="t" style="left:537.00px;top:589.42px;font-size:19px;line-height:19px;color:#000;font-family:'Liberation Sans', sans-serif;transform:scale(0.9630,1);transform-origin:0 16.08px;">Framework</span>
<div style="left:506px;top:617.5px;width:394px;height:36px;background:#efe5dc;"></div>
<svg style="left:511.5px;top:626.0px" width="19" height="19" viewBox="0 0 19 19"><rect x="1" y="1" width="17" height="17" fill="none" stroke="#000" stroke-width="2" stroke-dasharray="2 2.25"/></svg>
<span class="t" style="left:537.00px;top:625.42px;font-size:19px;line-height:19px;color:#000;font-family:'Liberation Sans', sans-serif;transform:scale(0.9534,1);transform-origin:0 16.08px;">Roman Temple</span>
<svg style="left:511.5px;top:662.0px" width="19" height="19" viewBox="0 0 19 19"><rect x="1" y="1" width="17" height="17" fill="none" stroke="#000" stroke-width="2" stroke-dasharray="2 2.25"/></svg>
<span class="t" style="left:537.00px;top:661.42px;font-size:19px;line-height:19px;color:#000;font-family:'Liberation Sans', sans-serif;transform:scale(0.9466,1);transform-origin:0 16.08px;">Menger Sponge</span>
<div style="left:506px;top:689.5px;width:394px;height:36px;background:#efe5dc;"></div>
<svg style="left:511.5px;top:698.0px" width="19" height="19" viewBox="0 0 19 19"><rect x="1" y="1" width="17" height="17" fill="none" stroke="#000" stroke-width="2" stroke-dasharray="2 2.25"/></svg>
<span class="t" style="left:537.00px;top:697.42px;font-size:19px;line-height:19px;color:#000;font-family:'Liberation Sans', sans-serif;transform:scale(1.0414,1);transform-origin:0 16.08px;">Tri-Pyramid</span>
<div style="left:744px;top:50px;width:1176px;height:1030px;background:#000;"></div>
<div style="left:746px;top:52px;width:1172px;height:34px;background:conic-gradient(from 0deg at 50% 50%, #4e4e4e 25%, #d3d3d3 0) 2px 2px/4px 4px;"></div>
<div style="left:746px;top:52px;width:1172px;height:1.5px;background:#f4f4f4;"></div>
<div style="left:746px;top:84px;width:1172px;height:2px;background:#9a9a9c;"></div>
<div style="left:746px;top:52px;width:34px;height:34px;background:#c9c9cb;border-top:1.5px solid #fff;border-left:1.5px solid #eee;border-bottom:2px solid #9a9a9c;"></div>
<div style="left:780px;top:52px;width:2px;height:34px;background:#000;"></div>
<div style="left:751px;top:57px;width:24px;height:22px;background:#78726c;border:2px solid #000;"></div>
<div style="left:761px;top:59px;width:2px;height:2px;background:#000;"></div>
<div style="left:761px;top:63px;width:2px;height:2px;background:#000;"></div>
<div style="left:761px;top:67px;width:2px;height:2px;background:#000;"></div>
<div style="left:757px;top:67px;width:2px;height:2px;background:#000;"></div>
<div style="left:753px;top:67px;width:2px;height:2px;background:#000;"></div>
<div style="left:1882px;top:52px;width:2px;height:34px;background:#000;"></div>
<div style="left:1884px;top:52px;width:34px;height:34px;background:#c9c9cb;border-top:1.5px solid #fff;border-left:1.5px solid #eee;border-bottom:2px solid #9a9a9c;"></div>
<svg style="left:1890px;top:58px" width="22" height="22" viewBox="0 0 22 22"><path d="M3.5 3.5L18.5 18.5M18.5 3.5L3.5 18.5" stroke="#1c1c1c" stroke-width="5.6" stroke-linecap="square"/><path d="M3.5 3.5L18.5 18.5M18.5 3.5L3.5 18.5" stroke="#727272" stroke-width="2.8" stroke-linecap="square"/></svg>
<div style="left:1280px;top:54px;width:104px;height:30px;background:#f5054e;"></div>
<span class="t" style="left:1286.50px;top:60.42px;font-size:19px;line-height:19px;color:#2a0a12;font-family:'Liberation Sans', sans-serif;transform:scale(0.8313,1);transform-origin:0 16.08px;">REPLIPAINT</span>
<div style="left:746px;top:88px;width:10px;height:990px;background:conic-gradient(from 0deg at 50% 50%, #4e4e4e 25%, #d3d3d3 0) 0px 0px/4px 4px;"></div>
<div style="left:1908px;top:88px;width:10px;height:990px;background:conic-gradient(from 0deg at 50% 50%, #4e4e4e 25%, #d3d3d3 0) 0px 0px/4px 4px;"></div>
<div style="left:746px;top:1068px;width:1172px;height:10px;background:conic-gradient(from 0deg at 50% 50%, #4e4e4e 25%, #d3d3d3 0) 0px 1px/4px 4px;"></div>
<div style="left:756px;top:88px;width:1152px;height:980px;background:#000;"></div>
<div style="left:758px;top:88px;width:1148px;height:978px;background:#fdf0e6;"></div>
<div style="left:746px;top:1056px;width:10px;height:22px;background:#c9c9cb;border-top:2px solid #000;"></div>
<div style="left:746px;top:1068px;width:18px;height:10px;background:#c9c9cb;border-right:2px solid #000;"></div>
<div style="left:1908px;top:1056px;width:10px;height:22px;background:#c9c9cb;border-top:2px solid #000;"></div>
<div style="left:1900px;top:1068px;width:18px;height:10px;background:#c9c9cb;border-left:2px solid #000;"></div>
<div style="left:758px;top:88px;width:1148px;height:978px;background:#fdf0e6;"></div>
<div style="left:758px;top:88px;width:1146px;height:30px;background:#3a5b8c;"></div>
<span class="t" style="left:765.00px;top:93.92px;font-size:19px;line-height:19px;color:#dfe9f5;font-family:'Liberation Sans', sans-serif;transform:scale(0.9022,1);transform-origin:0 16.08px;">RepliPAINT Actions</span>
<div style="left:758px;top:122.5px;width:637px;height:40.5px;background:#efe5dc;"></div>
<div style="left:758px;top:118px;width:637px;height:860px;overflow:hidden;"><span class="t" style="left:-52.2px;top:13.53px;width:80px;text-align:right;font:26px/26px 'Liberation Mono', monospace;color:#9d958e;-webkit-text-stroke:0;transform:scaleX(0.8346);transform-origin:100% 0;">1</span><span class="t" style="left:46px;top:13.53px;font:26px/26px 'Liberation Mono', monospace;-webkit-text-stroke:0;transform:scaleX(0.8974);transform-origin:0 0;"><span style="color:#0c0c0c">rx</span> <span style="color:#43a065">=</span> <span style="color:#43a065">(</span><span style="color:#43a065">(</span><span style="color:#ea8a3a">x</span><span style="color:#43a065">-</span><span style="color:#3a4f8c">8</span><span style="color:#43a065">)</span><span style="color:#43a065">+</span><span style="color:#43a065">(</span><span style="color:#ea8a3a">y</span><span style="color:#43a065">/</span><span style="color:#3a4f8c">2</span><span style="color:#43a065">)</span><span style="color:#43a065">)</span></span><span class="t" style="left:-52.2px;top:55.53px;width:80px;text-align:right;font:26px/26px 'Liberation Mono', monospace;color:#9d958e;-webkit-text-stroke:0;transform:scaleX(0.8346);transform-origin:100% 0;">2</span><span class="t" style="left:46px;top:55.53px;font:26px/26px 'Liberation Mono', monospace;-webkit-text-stroke:0;transform:scaleX(0.8974);transform-origin:0 0;"><span style="color:#0c0c0c">ry</span> <span style="color:#43a065">=</span> <span style="color:#43a065">(</span><span style="color:#43a065">(</span><span style="color:#ea8a3a">y</span><span style="color:#43a065">-</span><span style="color:#3a4f8c">4</span><span style="color:#43a065">)</span><span style="color:#43a065">-</span><span style="color:#43a065">(</span><span style="color:#ea8a3a">x</span><span style="color:#43a065">/</span><span style="color:#3a4f8c">2</span><span style="color:#43a065">)</span><span style="color:#43a065">)</span></span><span class="t" style="left:-52.2px;top:97.53px;width:80px;text-align:right;font:26px/26px 'Liberation Mono', monospace;color:#9d958e;-webkit-text-stroke:0;transform:scaleX(0.8346);transform-origin:100% 0;">3</span><span class="t" style="left:-52.2px;top:139.53px;width:80px;text-align:right;font:26px/26px 'Liberation Mono', monospace;color:#9d958e;-webkit-text-stroke:0;transform:scaleX(0.8346);transform-origin:100% 0;">4</span><span class="t" style="left:46px;top:139.53px;font:26px/26px 'Liberation Mono', monospace;-webkit-text-stroke:0;transform:scaleX(0.8974);transform-origin:0 0;"><span style="color:#0c0c0c">tx</span> <span style="color:#43a065">=</span> <span style="color:#0c0c0c">rx</span> <span style="color:#43a065">%</span> <span style="color:#3a4f8c">16</span></span><span class="t" style="left:-52.2px;top:181.53px;width:80px;text-align:right;font:26px/26px 'Liberation Mono', monospace;color:#9d958e;-webkit-text-stroke:0;transform:scaleX(0.8346);transform-origin:100% 0;">5</span><span class="t" style="left:46px;top:181.53px;font:26px/26px 'Liberation Mono', monospace;-webkit-text-stroke:0;transform:scaleX(0.8974);transform-origin:0 0;"><span style="color:#0c0c0c">ty</span> <span style="color:#43a065">=</span> <span style="color:#0c0c0c">ry</span> <span style="color:#43a065">%</span> <span style="color:#3a4f8c">16</span></span><span class="t" style="left:-52.2px;top:223.53px;width:80px;text-align:right;font:26px/26px 'Liberation Mono', monospace;color:#9d958e;-webkit-text-stroke:0;transform:scaleX(0.8346);transform-origin:100% 0;">6</span><span class="t" style="left:-52.2px;top:265.53px;width:80px;text-align:right;font:26px/26px 'Liberation Mono', monospace;color:#9d958e;-webkit-text-stroke:0;transform:scaleX(0.8346);transform-origin:100% 0;">7</span><span class="t" style="left:46px;top:265.53px;font:26px/26px 'Liberation Mono', monospace;-webkit-text-stroke:0;transform:scaleX(0.8974);transform-origin:0 0;"><span style="color:#0c0c0c">cx</span> <span style="color:#43a065">=</span> <span style="color:#0c0c0c">tx</span> <span style="color:#43a065">-</span> <span style="color:#3a4f8c">7</span></span><span class="t" style="left:-52.2px;top:307.53px;width:80px;text-align:right;font:26px/26px 'Liberation Mono', monospace;color:#9d958e;-webkit-text-stroke:0;transform:scaleX(0.8346);transform-origin:100% 0;">8</span><span class="t" style="left:46px;top:307.53px;font:26px/26px 'Liberation Mono', monospace;-webkit-text-stroke:0;transform:scaleX(0.8974);transform-origin:0 0;"><span style="color:#0c0c0c">cy</span> <span style="color:#43a065">=</span> <span style="color:#0c0c0c">ty</span> <span style="color:#43a065">-</span> <span style="color:#3a4f8c">7</span></span><span class="t" style="left:-52.2px;top:349.53px;width:80px;text-align:right;font:26px/26px 'Liberation Mono', monospace;color:#9d958e;-webkit-text-stroke:0;transform:scaleX(0.8346);transform-origin:100% 0;">9</span><span class="t" style="left:-52.2px;top:391.53px;width:80px;text-align:right;font:26px/26px 'Liberation Mono', monospace;color:#9d958e;-webkit-text-stroke:0;transform:scaleX(0.8346);transform-origin:100% 0;">10</span><span class="t" style="left:46px;top:391.53px;font:26px/26px 'Liberation Mono', monospace;-webkit-text-stroke:0;transform:scaleX(0.8974);transform-origin:0 0;"><span style="color:#0c0c0c">m</span> <span style="color:#43a065">=</span> <span style="color:#43a065">max</span><span style="color:#43a065">(</span><span style="color:#43a065">abs</span><span style="color:#43a065">(</span><span style="color:#0c0c0c">cx</span><span style="color:#43a065">)</span><span style="color:#43a065">,</span> <span style="color:#43a065">abs</span><span style="color:#43a065">(</span><span style="color:#0c0c0c">cy</span><span style="color:#43a065">)</span><span style="color:#43a065">)</span></span><span class="t" style="left:-52.2px;top:433.53px;width:80px;text-align:right;font:26px/26px 'Liberation Mono', monospace;color:#9d958e;-webkit-text-stroke:0;transform:scaleX(0.8346);transform-origin:100% 0;">11</span><span class="t" style="left:-52.2px;top:475.53px;width:80px;text-align:right;font:26px/26px 'Liberation Mono', monospace;color:#9d958e;-webkit-text-stroke:0;transform:scaleX(0.8346);transform-origin:100% 0;">12</span><span class="t" style="left:46px;top:475.53px;font:26px/26px 'Liberation Mono', monospace;-webkit-text-stroke:0;transform:scaleX(0.8974);transform-origin:0 0;"><span style="color:#0c0c0c">tile_x</span> <span style="color:#43a065">=</span> <span style="color:#43a065">floor</span><span style="color:#43a065">(</span><span style="color:#0c0c0c">rx</span><span style="color:#43a065">/</span><span style="color:#3a4f8c">16</span><span style="color:#43a065">)</span></span><span class="t" style="left:-52.2px;top:517.53px;width:80px;text-align:right;font:26px/26px 'Liberation Mono', monospace;color:#9d958e;-webkit-text-stroke:0;transform:scaleX(0.8346);transform-origin:100% 0;">13</span><span class="t" style="left:46px;top:517.53px;font:26px/26px 'Liberation Mono', monospace;-webkit-text-stroke:0;transform:scaleX(0.8974);transform-origin:0 0;"><span style="color:#0c0c0c">tile_y</span> <span style="color:#43a065">=</span> <span style="color:#43a065">floor</span><span style="color:#43a065">(</span><span style="color:#0c0c0c">ry</span><span style="color:#43a065">/</span><span style="color:#3a4f8c">16</span><span style="color:#43a065">)</span></span><span class="t" style="left:-52.2px;top:559.53px;width:80px;text-align:right;font:26px/26px 'Liberation Mono', monospace;color:#9d958e;-webkit-text-stroke:0;transform:scaleX(0.8346);transform-origin:100% 0;">14</span><span class="t" style="left:46px;top:559.53px;font:26px/26px 'Liberation Mono', monospace;-webkit-text-stroke:0;transform:scaleX(0.8974);transform-origin:0 0;"><span style="color:#0c0c0c">t_c</span> <span style="color:#43a065">=</span> <span style="color:#43a065">(</span><span style="color:#43a065">(</span><span style="color:#43a065">(</span><span style="color:#0c0c0c">tile_x</span> <span style="color:#43a065">*</span> <span style="color:#3a4f8c">3</span> <span style="color:#43a065">+</span> <span style="color:#0c0c0c">tile_y</span> <span style="color:#43a065">*</span> <span style="color:#3a4f8c">2</span><span style="color:#43a065">)</span><span style="color:#43a065">)</span> <span style="color:#43a065">%</span> <span style="color:#3a4f8c">4</span><span style="color:#43a065">)</span></span><span class="t" style="left:-52.2px;top:601.53px;width:80px;text-align:right;font:26px/26px 'Liberation Mono', monospace;color:#9d958e;-webkit-text-stroke:0;transform:scaleX(0.8346);transform-origin:100% 0;">15</span><span class="t" style="left:46px;top:601.53px;font:26px/26px 'Liberation Mono', monospace;-webkit-text-stroke:0;transform:scaleX(0.8974);transform-origin:0 0;"><span style="color:#0c0c0c">p</span> <span style="color:#43a065">=</span> <span style="color:#43a065">{</span> <span style="color:#3a4f8c">12</span><span style="color:#43a065">,</span> <span style="color:#3a4f8c">6</span><span style="color:#43a065">,</span> <span style="color:#3a4f8c">13</span><span style="color:#43a065">,</span> <span style="color:#3a4f8c">7</span> <span style="color:#43a065">}</span></span><span class="t" style="left:-52.2px;top:643.53px;width:80px;text-align:right;font:26px/26px 'Liberation Mono', monospace;color:#9d958e;-webkit-text-stroke:0;transform:scaleX(0.8346);transform-origin:100% 0;">16</span><span class="t" style="left:46px;top:643.53px;font:26px/26px 'Liberation Mono', monospace;-webkit-text-stroke:0;transform:scaleX(0.8974);transform-origin:0 0;"><span style="color:#0c0c0c">c</span> <span style="color:#43a065">=</span> <span style="color:#0c0c0c">p</span><span style="color:#43a065">[</span><span style="color:#0c0c0c">t_c</span><span style="color:#43a065">+</span><span style="color:#3a4f8c">1</span><span style="color:#43a065">]</span></span><span class="t" style="left:-52.2px;top:685.53px;width:80px;text-align:right;font:26px/26px 'Liberation Mono', monospace;color:#9d958e;-webkit-text-stroke:0;transform:scaleX(0.8346);transform-origin:100% 0;">17</span><span class="t" style="left:-52.2px;top:727.53px;width:80px;text-align:right;font:26px/26px 'Liberation Mono', monospace;color:#9d958e;-webkit-text-stroke:0;transform:scaleX(0.8346);transform-origin:100% 0;">18</span><span class="t" style="left:-52.2px;top:769.53px;width:80px;text-align:right;font:26px/26px 'Liberation Mono', monospace;color:#9d958e;-webkit-text-stroke:0;transform:scaleX(0.8346);transform-origin:100% 0;">19</span><span class="t" style="left:46px;top:769.53px;font:26px/26px 'Liberation Mono', monospace;-webkit-text-stroke:0;transform:scaleX(0.8974);transform-origin:0 0;"><span style="color:#1f4fcc">if</span> <span style="color:#43a065">(</span><span style="color:#ea8a3a">x</span> <span style="color:#43a065">+</span> <span style="color:#ea8a3a">y</span><span style="color:#43a065">)</span> <span style="color:#43a065">%</span> <span style="color:#3a4f8c">4</span> <span style="color:#43a065">=</span><span style="color:#43a065">=</span> <span style="color:#3a4f8c">1</span> <span style="color:#1f4fcc">and</span> <span style="color:#ea8a3a">y</span> <span style="color:#43a065">%</span> <span style="color:#3a4f8c">2</span> <span style="color:#43a065">=</span><span style="color:#43a065">=</span> <span style="color:#3a4f8c">0</span> <span style="color:#1f4fcc">then</span></span><span class="t" style="left:-52.2px;top:811.53px;width:80px;text-align:right;font:26px/26px 'Liberation Mono', monospace;color:#9d958e;-webkit-text-stroke:0;transform:scaleX(0.8346);transform-origin:100% 0;">20</span><span class="t" style="left:46px;top:811.53px;font:26px/26px 'Liberation Mono', monospace;-webkit-text-stroke:0;transform:scaleX(0.8974);transform-origin:0 0;">  <span style="color:#1f4fcc">if</span> <span style="color:#0c0c0c">c</span> <span style="color:#43a065">~</span><span style="color:#43a065">=</span> <span style="color:#3a4f8c">12</span> <span style="color:#1f4fcc">then</span> <span style="color:#0c0c0c">c</span> <span style="color:#43a065">=</span> <span style="color:#3a4f8c">12</span> <span style="color:#1f4fcc">else</span> <span style="color:#0c0c0c">c</span> <span style="color:#43a065">=</span> <span style="color:#3a4f8c">13</span> <span style="color:#1f4fcc">end</span></span><span class="t" style="left:-52.2px;top:853.53px;width:80px;text-align:right;font:26px/26px 'Liberation Mono', monospace;color:#9d958e;-webkit-text-stroke:0;transform:scaleX(0.8346);transform-origin:100% 0;">21</span><span class="t" style="left:46px;top:853.53px;font:26px/26px 'Liberation Mono', monospace;-webkit-text-stroke:0;transform:scaleX(0.8974);transform-origin:0 0;"><span style="color:#1f4fcc">end</span></span></div>
<div style="left:1394px;top:118px;width:2px;height:860px;background:#000;"></div>
<div style="left:1396px;top:118px;width:12px;height:860px;background:#bfc0c6;"></div>
<div style="left:1396px;top:118px;width:12px;height:2px;background:#000;"></div>
<div style="left:1396px;top:120px;width:12px;height:1.5px;background:#d9d9dc;"></div>
<div style="left:1396px;top:121.5px;width:12px;height:2.5px;background:#000;"></div>
<div style="left:1396px;top:124px;width:12px;height:2px;background:#f4f4f4;"></div>
<div style="left:1396px;top:804.3px;width:12px;height:1.2px;background:#777;"></div>
<div style="left:1396px;top:805.5px;width:12px;height:3px;background:#000;"></div>
<div style="left:1396px;top:810px;width:12px;height:1.5px;background:#d6d6d8;"></div>
<div style="left:1408px;top:118px;width:4px;height:950px;background:#000;"></div>
<div style="left:1412px;top:118px;width:10px;height:950px;background:#c4c5c7;"></div>
<div style="left:1422px;top:118px;width:2px;height:950px;background:#000;"></div>
<div style="left:1412px;top:569.5px;width:10px;height:45px;background:conic-gradient(from 0deg at 50% 50%, #4e4e4e 25%, #d3d3d3 0) 0px 0.5px/4px 4px;"></div>
<div style="left:1412px;top:568.5px;width:10px;height:2px;border-top:2px dotted #000;"></div>
<div style="left:1412px;top:613px;width:10px;height:2px;border-top:2px dotted #000;"></div>
<div style="left:758px;top:977.5px;width:652px;height:41px;background:#c9c9cb;"></div>
<div style="left:762px;top:982px;width:388px;height:31.5px;background:#ffdc32;border:2px dotted #000;"></div>
<span class="t" style="left:872.00px;top:988.22px;font-size:19px;line-height:19px;color:#000;font-family:'Liberation Sans', sans-serif;transform:scale(0.8467,1);transform-origin:0 16.08px;">RUN CODE (CTRL+R)</span>
<div style="left:1157.5px;top:982px;width:248.5px;height:31.5px;background:#c9c9cb;border:2px dotted #000;"></div>
<span class="t" style="left:1161.50px;top:988.22px;font-size:19px;line-height:19px;color:#000;font-family:'Liberation Sans', sans-serif;transform:scale(0.9467,1);transform-origin:0 16.08px;">Auto run code as I type</span>
<div style="left:1356.5px;top:986.5px;width:45.5px;height:23.5px;background:#3f9e59;border:2px solid #000;border-radius:5px;"></div>
<div style="left:1377.5px;top:986.5px;width:24.5px;height:23.5px;background:#d6d6d8;border:2px solid #000;border-radius:5px;box-shadow:inset 1.5px 1.5px 0 #fff, inset -1.5px -1.5px 0 #9a9a9c;"></div>
<div style="left:758.0px;top:1017.5px;width:41.05px;height:48.5px;background:#dfe6f5;"></div>
<span class="t" style="left:772.33px;top:1031.22px;font-size:19px;line-height:19px;color:rgba(5,5,20,0.9);font-family:'Liberation Sans', sans-serif;transform:scale(0.8600,1);transform-origin:0 16.08px;">1</span>
<div style="left:798.75px;top:1017.5px;width:41.05px;height:48.5px;background:#6a7899;"></div>
<span class="t" style="left:813.08px;top:1031.22px;font-size:19px;line-height:19px;color:rgba(5,5,20,0.9);font-family:'Liberation Sans', sans-serif;transform:scale(0.8600,1);transform-origin:0 16.08px;">2</span>
<div style="left:839.5px;top:1017.5px;width:41.05px;height:48.5px;background:#14171b;"></div>
<span class="t" style="left:853.83px;top:1031.22px;font-size:19px;line-height:19px;color:rgba(5,5,20,0.9);font-family:'Liberation Sans', sans-serif;transform:scale(0.8600,1);transform-origin:0 16.08px;">3</span>
<div style="left:880.25px;top:1017.5px;width:41.05px;height:48.5px;background:#f5a6a5;"></div>
<span class="t" style="left:894.58px;top:1031.22px;font-size:19px;line-height:19px;color:rgba(5,5,20,0.9);font-family:'Liberation Sans', sans-serif;transform:scale(0.8600,1);transform-origin:0 16.08px;">4</span>
<div style="left:921.0px;top:1017.5px;width:41.05px;height:48.5px;background:#d4689d;"></div>
<span class="t" style="left:935.33px;top:1031.22px;font-size:19px;line-height:19px;color:rgba(5,5,20,0.9);font-family:'Liberation Sans', sans-serif;transform:scale(0.8600,1);transform-origin:0 16.08px;">5</span>
<div style="left:961.75px;top:1017.5px;width:41.05px;height:48.5px;background:#7a2f9c;"></div>
<span class="t" style="left:976.08px;top:1031.22px;font-size:19px;line-height:19px;color:rgba(5,5,20,0.9);font-family:'Liberation Sans', sans-serif;transform:scale(0.8600,1);transform-origin:0 16.08px;">6</span>
<div style="left:1002.5px;top:1017.5px;width:41.05px;height:48.5px;background:#e63764;"></div>
<span class="t" style="left:1016.83px;top:1031.22px;font-size:19px;line-height:19px;color:rgba(5,5,20,0.9);font-family:'Liberation Sans', sans-serif;transform:scale(0.8600,1);transform-origin:0 16.08px;">7</span>
<div style="left:1043.25px;top:1017.5px;width:41.05px;height:48.5px;background:#f2835c;"></div>
<span class="t" style="left:1057.58px;top:1031.22px;font-size:19px;line-height:19px;color:rgba(5,5,20,0.9);font-family:'Liberation Sans', sans-serif;transform:scale(0.8600,1);transform-origin:0 16.08px;">8</span>
<div style="left:1084.0px;top:1017.5px;width:41.05px;height:48.5px;background:#fdc56c;"></div>
<span class="t" style="left:1098.33px;top:1031.22px;font-size:19px;line-height:19px;color:rgba(5,5,20,0.9);font-family:'Liberation Sans', sans-serif;transform:scale(0.8600,1);transform-origin:0 16.08px;">9</span>
<div style="left:1124.75px;top:1017.5px;width:41.05px;height:48.5px;background:#85bd4b;"></div>
<span class="t" style="left:1134.53px;top:1031.22px;font-size:19px;line-height:19px;color:rgba(5,5,20,0.9);font-family:'Liberation Sans', sans-serif;transform:scale(0.8600,1);transform-origin:0 16.08px;">10</span>
<div style="left:1165.5px;top:1017.5px;width:41.05px;height:48.5px;background:#3f9b5a;"></div>
<span class="t" style="left:1175.89px;top:1031.22px;font-size:19px;line-height:19px;color:rgba(5,5,20,0.9);font-family:'Liberation Sans', sans-serif;transform:scale(0.8600,1);transform-origin:0 16.08px;">11</span>
<div style="left:1206.25px;top:1017.5px;width:41.05px;height:48.5px;background:#363363;"></div>
<span class="t" style="left:1216.03px;top:1031.22px;font-size:19px;line-height:19px;color:rgba(5,5,20,0.9);font-family:'Liberation Sans', sans-serif;transform:scale(0.8600,1);transform-origin:0 16.08px;">12</span>
<div style="left:1247.0px;top:1017.5px;width:41.05px;height:48.5px;background:#4855a8;"></div>
<span class="t" style="left:1256.78px;top:1031.22px;font-size:19px;line-height:19px;color:rgba(5,5,20,0.9);font-family:'Liberation Sans', sans-serif;transform:scale(0.8600,1);transform-origin:0 16.08px;">13</span>
<div style="left:1287.75px;top:1017.5px;width:41.05px;height:48.5px;background:#719ad9;"></div>
<span class="t" style="left:1297.53px;top:1031.22px;font-size:19px;line-height:19px;color:rgba(5,5,20,0.9);font-family:'Liberation Sans', sans-serif;transform:scale(0.8600,1);transform-origin:0 16.08px;">14</span>
<div style="left:1328.5px;top:1017.5px;width:41.05px;height:48.5px;background:#9f5354;"></div>
<span class="t" style="left:1338.28px;top:1031.22px;font-size:19px;line-height:19px;color:rgba(5,5,20,0.9);font-family:'Liberation Sans', sans-serif;transform:scale(0.8600,1);transform-origin:0 16.08px;">15</span>
<div style="left:1369.25px;top:1017.5px;width:41.05px;height:48.5px;background:#4e2537;"></div>
<span class="t" style="left:1379.03px;top:1031.22px;font-size:19px;line-height:19px;color:rgba(5,5,20,0.9);font-family:'Liberation Sans', sans-serif;transform:scale(0.8600,1);transform-origin:0 16.08px;">16</span>
<div style="left:758px;top:1066px;width:1146.5px;height:2px;background:#000;"></div>
<span class="t" style="left:1427.50px;top:123.92px;font-size:19px;line-height:19px;color:#000;font-family:'Liberation Sans', sans-serif;transform:scale(0.8664,1);transform-origin:0 16.08px;">OUTPUT IMAGE</span>
<svg style="left:1428px;top:152px;filter:blur(0.5px)" width="442" height="787" viewBox="0 0 90 160" preserveAspectRatio="none" shape-rendering="crispEdges"><rect width="90" height="160" fill="#373463"/><path fill="#7a2d9a" d="M24 0h1v1h-1zM56 0h1v1h-1zM88 0h1v1h-1zM24 1h3v1h-3zM56 1h3v1h-3zM88 1h2v1h-2zM24 2h3v1h-3zM28 2h1v1h-1zM56 2h3v1h-3zM60 2h1v1h-1zM88 2h2v1h-2zM23 3h8v1h-8zM55 3h8v1h-8zM87 3h3v1h-3zM0 4h1v1h-1zM22 4h3v1h-3zM26 4h3v1h-3zM30 4h3v1h-3zM54 4h3v1h-3zM58 4h3v1h-3zM62 4h3v1h-3zM86 4h3v1h-3zM0 5h3v1h-3zM22 5h13v1h-13zM54 5h13v1h-13zM86 5h4v1h-4zM0 6h3v1h-3zM21 6h2v1h-2zM24 6h3v1h-3zM28 6h3v1h-3zM32 6h3v1h-3zM53 6h2v1h-2zM56 6h3v1h-3zM60 6h3v1h-3zM64 6h3v1h-3zM85 6h2v1h-2zM88 6h2v1h-2zM0 7h3v1h-3zM21 7h14v1h-14zM53 7h14v1h-14zM85 7h5v1h-5zM0 8h1v1h-1zM2 8h1v1h-1zM20 8h1v1h-1zM22 8h3v1h-3zM26 8h3v1h-3zM30 8h3v1h-3zM34 8h1v1h-1zM52 8h1v1h-1zM54 8h3v1h-3zM58 8h3v1h-3zM62 8h3v1h-3zM66 8h1v1h-1zM84 8h1v1h-1zM86 8h3v1h-3zM0 9h2v1h-2zM20 9h14v1h-14zM52 9h14v1h-14zM84 9h6v1h-6zM0 10h2v1h-2zM20 10h3v1h-3zM24 10h3v1h-3zM28 10h3v1h-3zM32 10h2v1h-2zM52 10h3v1h-3zM56 10h3v1h-3zM60 10h3v1h-3zM64 10h2v1h-2zM84 10h3v1h-3zM88 10h2v1h-2zM0 11h1v1h-1zM19 11h14v1h-14zM51 11h14v1h-14zM83 11h7v1h-7zM0 12h1v1h-1zM20 12h1v1h-1zM22 12h3v1h-3zM26 12h3v1h-3zM30 12h3v1h-3zM52 12h1v1h-1zM54 12h3v1h-3zM58 12h3v1h-3zM62 12h3v1h-3zM84 12h1v1h-1zM86 12h3v1h-3zM22 13h10v1h-10zM54 13h10v1h-10zM86 13h4v1h-4zM24 14h3v1h-3zM28 14h3v1h-3zM56 14h3v1h-3zM60 14h3v1h-3zM88 14h2v1h-2zM26 15h5v1h-5zM58 15h5v1h-5zM28 16h1v1h-1zM30 16h1v1h-1zM60 16h1v1h-1zM62 16h1v1h-1zM12 26h1v1h-1zM44 26h1v1h-1zM76 26h1v1h-1zM11 27h4v1h-4zM43 27h4v1h-4zM75 27h4v1h-4zM10 28h3v1h-3zM14 28h3v1h-3zM42 28h3v1h-3zM46 28h3v1h-3zM74 28h3v1h-3zM78 28h3v1h-3zM10 29h9v1h-9zM42 29h9v1h-9zM74 29h9v1h-9zM9 30h2v1h-2zM12 30h3v1h-3zM16 30h3v1h-3zM20 30h1v1h-1zM41 30h2v1h-2zM44 30h3v1h-3zM48 30h3v1h-3zM52 30h1v1h-1zM73 30h2v1h-2zM76 30h3v1h-3zM80 30h3v1h-3zM84 30h1v1h-1zM9 31h14v1h-14zM41 31h14v1h-14zM73 31h14v1h-14zM8 32h1v1h-1zM10 32h3v1h-3zM14 32h3v1h-3zM18 32h3v1h-3zM22 32h1v1h-1zM40 32h1v1h-1zM42 32h3v1h-3zM46 32h3v1h-3zM50 32h3v1h-3zM54 32h1v1h-1zM72 32h1v1h-1zM74 32h3v1h-3zM78 32h3v1h-3zM82 32h3v1h-3zM86 32h1v1h-1zM8 33h14v1h-14zM40 33h14v1h-14zM72 33h14v1h-14zM8 34h3v1h-3zM12 34h3v1h-3zM16 34h3v1h-3zM20 34h2v1h-2zM40 34h3v1h-3zM44 34h3v1h-3zM48 34h3v1h-3zM52 34h2v1h-2zM72 34h3v1h-3zM76 34h3v1h-3zM80 34h3v1h-3zM84 34h2v1h-2zM7 35h14v1h-14zM39 35h14v1h-14zM71 35h14v1h-14zM6 36h3v1h-3zM10 36h3v1h-3zM14 36h3v1h-3zM18 36h3v1h-3zM38 36h3v1h-3zM42 36h3v1h-3zM46 36h3v1h-3zM50 36h3v1h-3zM70 36h3v1h-3zM74 36h3v1h-3zM78 36h3v1h-3zM82 36h3v1h-3zM6 37h14v1h-14zM38 37h14v1h-14zM70 37h14v1h-14zM8 38h3v1h-3zM12 38h3v1h-3zM16 38h3v1h-3zM40 38h3v1h-3zM44 38h3v1h-3zM48 38h3v1h-3zM72 38h3v1h-3zM76 38h3v1h-3zM80 38h3v1h-3zM10 39h9v1h-9zM42 39h9v1h-9zM74 39h9v1h-9zM12 40h1v1h-1zM14 40h3v1h-3zM18 40h1v1h-1zM44 40h1v1h-1zM46 40h3v1h-3zM50 40h1v1h-1zM76 40h1v1h-1zM78 40h3v1h-3zM82 40h1v1h-1zM14 41h4v1h-4zM46 41h4v1h-4zM78 41h4v1h-4zM16 42h2v1h-2zM48 42h2v1h-2zM80 42h2v1h-2zM0 52h1v1h-1zM30 52h3v1h-3zM62 52h3v1h-3zM0 53h3v1h-3zM30 53h5v1h-5zM62 53h5v1h-5zM0 54h3v1h-3zM4 54h1v1h-1zM29 54h2v1h-2zM32 54h3v1h-3zM36 54h1v1h-1zM61 54h2v1h-2zM64 54h3v1h-3zM68 54h1v1h-1zM0 55h7v1h-7zM29 55h10v1h-10zM61 55h10v1h-10zM0 56h1v1h-1zM2 56h3v1h-3zM6 56h3v1h-3zM28 56h1v1h-1zM30 56h3v1h-3zM34 56h3v1h-3zM38 56h3v1h-3zM60 56h1v1h-1zM62 56h3v1h-3zM66 56h3v1h-3zM70 56h3v1h-3zM0 57h10v1h-10zM28 57h14v1h-14zM60 57h14v1h-14zM0 58h3v1h-3zM4 58h3v1h-3zM8 58h2v1h-2zM28 58h3v1h-3zM32 58h3v1h-3zM36 58h3v1h-3zM40 58h2v1h-2zM60 58h3v1h-3zM64 58h3v1h-3zM68 58h3v1h-3zM72 58h2v1h-2zM0 59h9v1h-9zM27 59h14v1h-14zM59 59h14v1h-14zM0 60h1v1h-1zM2 60h3v1h-3zM6 60h3v1h-3zM26 60h3v1h-3zM30 60h3v1h-3zM34 60h3v1h-3zM38 60h3v1h-3zM58 60h3v1h-3zM62 60h3v1h-3zM66 60h3v1h-3zM70 60h3v1h-3zM0 61h8v1h-8zM26 61h14v1h-14zM58 61h14v1h-14zM0 62h3v1h-3zM4 62h3v1h-3zM25 62h2v1h-2zM28 62h3v1h-3zM32 62h3v1h-3zM36 62h3v1h-3zM57 62h2v1h-2zM60 62h3v1h-3zM64 62h3v1h-3zM68 62h3v1h-3zM89 62h1v1h-1zM0 63h7v1h-7zM26 63h13v1h-13zM58 63h13v1h-13zM0 64h1v1h-1zM2 64h3v1h-3zM6 64h1v1h-1zM28 64h1v1h-1zM30 64h3v1h-3zM34 64h3v1h-3zM38 64h1v1h-1zM60 64h1v1h-1zM62 64h3v1h-3zM66 64h3v1h-3zM70 64h1v1h-1zM0 65h6v1h-6zM30 65h8v1h-8zM62 65h8v1h-8zM0 66h3v1h-3zM4 66h2v1h-2zM32 66h3v1h-3zM36 66h2v1h-2zM64 66h3v1h-3zM68 66h2v1h-2zM2 67h3v1h-3zM34 67h3v1h-3zM66 67h3v1h-3zM4 68h1v1h-1zM36 68h1v1h-1zM68 68h1v1h-1zM18 77h1v1h-1zM50 77h1v1h-1zM82 77h1v1h-1zM17 78h2v1h-2zM20 78h1v1h-1zM49 78h2v1h-2zM52 78h1v1h-1zM81 78h2v1h-2zM84 78h1v1h-1zM17 79h6v1h-6zM49 79h6v1h-6zM81 79h6v1h-6zM16 80h1v1h-1zM18 80h3v1h-3zM22 80h3v1h-3zM48 80h1v1h-1zM50 80h3v1h-3zM54 80h3v1h-3zM80 80h1v1h-1zM82 80h3v1h-3zM86 80h3v1h-3zM16 81h11v1h-11zM48 81h11v1h-11zM80 81h10v1h-10zM16 82h3v1h-3zM20 82h3v1h-3zM24 82h3v1h-3zM28 82h1v1h-1zM48 82h3v1h-3zM52 82h3v1h-3zM56 82h3v1h-3zM60 82h1v1h-1zM80 82h3v1h-3zM84 82h3v1h-3zM88 82h2v1h-2zM15 83h14v1h-14zM47 83h14v1h-14zM79 83h11v1h-11zM14 84h3v1h-3zM18 84h3v1h-3zM22 84h3v1h-3zM26 84h3v1h-3zM46 84h3v1h-3zM50 84h3v1h-3zM54 84h3v1h-3zM58 84h3v1h-3zM78 84h3v1h-3zM82 84h3v1h-3zM86 84h3v1h-3zM14 85h14v1h-14zM46 85h14v1h-14zM78 85h12v1h-12zM13 86h2v1h-2zM16 86h3v1h-3zM20 86h3v1h-3zM24 86h3v1h-3zM45 86h2v1h-2zM48 86h3v1h-3zM52 86h3v1h-3zM56 86h3v1h-3zM77 86h2v1h-2zM80 86h3v1h-3zM84 86h3v1h-3zM88 86h2v1h-2zM13 87h14v1h-14zM45 87h14v1h-14zM77 87h13v1h-13zM12 88h1v1h-1zM14 88h3v1h-3zM18 88h3v1h-3zM22 88h3v1h-3zM26 88h1v1h-1zM44 88h1v1h-1zM46 88h3v1h-3zM50 88h3v1h-3zM54 88h3v1h-3zM58 88h1v1h-1zM76 88h1v1h-1zM78 88h3v1h-3zM82 88h3v1h-3zM86 88h3v1h-3zM14 89h12v1h-12zM46 89h12v1h-12zM78 89h12v1h-12zM16 90h3v1h-3zM20 90h3v1h-3zM24 90h2v1h-2zM48 90h3v1h-3zM52 90h3v1h-3zM56 90h2v1h-2zM80 90h3v1h-3zM84 90h3v1h-3zM88 90h2v1h-2zM18 91h7v1h-7zM50 91h7v1h-7zM82 91h7v1h-7zM20 92h1v1h-1zM22 92h3v1h-3zM52 92h1v1h-1zM54 92h3v1h-3zM84 92h1v1h-1zM86 92h3v1h-3zM22 93h2v1h-2zM54 93h2v1h-2zM86 93h2v1h-2zM5 103h2v1h-2zM37 103h2v1h-2zM69 103h2v1h-2zM4 104h1v1h-1zM6 104h3v1h-3zM36 104h1v1h-1zM38 104h3v1h-3zM68 104h1v1h-1zM70 104h3v1h-3zM4 105h7v1h-7zM36 105h7v1h-7zM68 105h7v1h-7zM4 106h3v1h-3zM8 106h3v1h-3zM12 106h1v1h-1zM36 106h3v1h-3zM40 106h3v1h-3zM44 106h1v1h-1zM68 106h3v1h-3zM72 106h3v1h-3zM76 106h1v1h-1zM3 107h12v1h-12zM35 107h12v1h-12zM67 107h12v1h-12zM2 108h3v1h-3zM6 108h3v1h-3zM10 108h3v1h-3zM14 108h3v1h-3zM34 108h3v1h-3zM38 108h3v1h-3zM42 108h3v1h-3zM46 108h3v1h-3zM66 108h3v1h-3zM70 108h3v1h-3zM74 108h3v1h-3zM78 108h3v1h-3zM2 109h14v1h-14zM34 109h14v1h-14zM66 109h14v1h-14zM1 110h2v1h-2zM4 110h3v1h-3zM8 110h3v1h-3zM12 110h3v1h-3zM33 110h2v1h-2zM36 110h3v1h-3zM40 110h3v1h-3zM44 110h3v1h-3zM65 110h2v1h-2zM68 110h3v1h-3zM72 110h3v1h-3zM76 110h3v1h-3zM1 111h14v1h-14zM33 111h14v1h-14zM65 111h14v1h-14zM0 112h1v1h-1zM2 112h3v1h-3zM6 112h3v1h-3zM10 112h3v1h-3zM14 112h1v1h-1zM32 112h1v1h-1zM34 112h3v1h-3zM38 112h3v1h-3zM42 112h3v1h-3zM46 112h1v1h-1zM64 112h1v1h-1zM66 112h3v1h-3zM70 112h3v1h-3zM74 112h3v1h-3zM78 112h1v1h-1zM0 113h14v1h-14zM32 113h14v1h-14zM64 113h14v1h-14zM0 114h3v1h-3zM4 114h3v1h-3zM8 114h3v1h-3zM12 114h2v1h-2zM32 114h3v1h-3zM36 114h3v1h-3zM40 114h3v1h-3zM44 114h2v1h-2zM64 114h3v1h-3zM68 114h3v1h-3zM72 114h3v1h-3zM76 114h2v1h-2zM2 115h11v1h-11zM34 115h11v1h-11zM66 115h11v1h-11zM4 116h1v1h-1zM6 116h3v1h-3zM10 116h3v1h-3zM36 116h1v1h-1zM38 116h3v1h-3zM42 116h3v1h-3zM68 116h1v1h-1zM70 116h3v1h-3zM74 116h3v1h-3zM6 117h6v1h-6zM38 117h6v1h-6zM70 117h6v1h-6zM8 118h3v1h-3zM40 118h3v1h-3zM72 118h3v1h-3zM10 119h1v1h-1zM42 119h1v1h-1zM74 119h1v1h-1zM24 128h1v1h-1zM56 128h1v1h-1zM88 128h1v1h-1zM24 129h3v1h-3zM56 129h3v1h-3zM88 129h2v1h-2zM24 130h3v1h-3zM28 130h1v1h-1zM56 130h3v1h-3zM60 130h1v1h-1zM88 130h2v1h-2zM23 131h8v1h-8zM55 131h8v1h-8zM87 131h3v1h-3zM0 132h1v1h-1zM22 132h3v1h-3zM26 132h3v1h-3zM30 132h3v1h-3zM54 132h3v1h-3zM58 132h3v1h-3zM62 132h3v1h-3zM86 132h3v1h-3zM0 133h3v1h-3zM22 133h13v1h-13zM54 133h13v1h-13zM86 133h4v1h-4zM0 134h3v1h-3zM21 134h2v1h-2zM24 134h3v1h-3zM28 134h3v1h-3zM32 134h3v1h-3zM53 134h2v1h-2zM56 134h3v1h-3zM60 134h3v1h-3zM64 134h3v1h-3zM85 134h2v1h-2zM88 134h2v1h-2zM0 135h3v1h-3zM21 135h14v1h-14zM53 135h14v1h-14zM85 135h5v1h-5zM0 136h1v1h-1zM2 136h1v1h-1zM20 136h1v1h-1zM22 136h3v1h-3zM26 136h3v1h-3zM30 136h3v1h-3zM34 136h1v1h-1zM52 136h1v1h-1zM54 136h3v1h-3zM58 136h3v1h-3zM62 136h3v1h-3zM66 136h1v1h-1zM84 136h1v1h-1zM86 136h3v1h-3zM0 137h2v1h-2zM20 137h14v1h-14zM52 137h14v1h-14zM84 137h6v1h-6zM0 138h2v1h-2zM20 138h3v1h-3zM24 138h3v1h-3zM28 138h3v1h-3zM32 138h2v1h-2zM52 138h3v1h-3zM56 138h3v1h-3zM60 138h3v1h-3zM64 138h2v1h-2zM84 138h3v1h-3zM88 138h2v1h-2zM0 139h1v1h-1zM19 139h14v1h-14zM51 139h14v1h-14zM83 139h7v1h-7zM0 140h1v1h-1zM20 140h1v1h-1zM22 140h3v1h-3zM26 140h3v1h-3zM30 140h3v1h-3zM52 140h1v1h-1zM54 140h3v1h-3zM58 140h3v1h-3zM62 140h3v1h-3zM84 140h1v1h-1zM86 140h3v1h-3zM22 141h10v1h-10zM54 141h10v1h-10zM86 141h4v1h-4zM24 142h3v1h-3zM28 142h3v1h-3zM56 142h3v1h-3zM60 142h3v1h-3zM88 142h2v1h-2zM26 143h5v1h-5zM58 143h5v1h-5zM28 144h1v1h-1zM30 144h1v1h-1zM60 144h1v1h-1zM62 144h1v1h-1zM12 154h1v1h-1zM44 154h1v1h-1zM76 154h1v1h-1zM11 155h4v1h-4zM43 155h4v1h-4zM75 155h4v1h-4zM10 156h3v1h-3zM14 156h3v1h-3zM42 156h3v1h-3zM46 156h3v1h-3zM74 156h3v1h-3zM78 156h3v1h-3zM10 157h9v1h-9zM42 157h9v1h-9zM74 157h9v1h-9zM9 158h2v1h-2zM12 158h3v1h-3zM16 158h3v1h-3zM20 158h1v1h-1zM41 158h2v1h-2zM44 158h3v1h-3zM48 158h3v1h-3zM52 158h1v1h-1zM73 158h2v1h-2zM76 158h3v1h-3zM80 158h3v1h-3zM84 158h1v1h-1zM9 159h14v1h-14zM41 159h14v1h-14zM73 159h14v1h-14z"/><path fill="#4855a9" d="M8 0h1v1h-1zM10 0h3v1h-3zM14 0h3v1h-3zM18 0h3v1h-3zM22 0h1v1h-1zM40 0h1v1h-1zM42 0h3v1h-3zM46 0h3v1h-3zM50 0h3v1h-3zM54 0h1v1h-1zM72 0h1v1h-1zM74 0h3v1h-3zM78 0h3v1h-3zM82 0h3v1h-3zM86 0h1v1h-1zM8 1h14v1h-14zM40 1h14v1h-14zM72 1h14v1h-14zM8 2h3v1h-3zM12 2h3v1h-3zM16 2h3v1h-3zM20 2h2v1h-2zM40 2h3v1h-3zM44 2h3v1h-3zM48 2h3v1h-3zM52 2h2v1h-2zM72 2h3v1h-3zM76 2h3v1h-3zM80 2h3v1h-3zM84 2h2v1h-2zM7 3h14v1h-14zM39 3h14v1h-14zM71 3h14v1h-14zM6 4h3v1h-3zM10 4h3v1h-3zM14 4h3v1h-3zM18 4h3v1h-3zM38 4h3v1h-3zM42 4h3v1h-3zM46 4h3v1h-3zM50 4h3v1h-3zM70 4h3v1h-3zM74 4h3v1h-3zM78 4h3v1h-3zM82 4h3v1h-3zM6 5h14v1h-14zM38 5h14v1h-14zM70 5h14v1h-14zM8 6h3v1h-3zM12 6h3v1h-3zM16 6h3v1h-3zM40 6h3v1h-3zM44 6h3v1h-3zM48 6h3v1h-3zM72 6h3v1h-3zM76 6h3v1h-3zM80 6h3v1h-3zM10 7h9v1h-9zM42 7h9v1h-9zM74 7h9v1h-9zM5 8h1v1h-1zM12 8h1v1h-1zM14 8h3v1h-3zM18 8h1v1h-1zM37 8h1v1h-1zM44 8h1v1h-1zM46 8h3v1h-3zM50 8h1v1h-1zM69 8h1v1h-1zM76 8h1v1h-1zM78 8h3v1h-3zM82 8h1v1h-1zM14 9h4v1h-4zM46 9h4v1h-4zM78 9h4v1h-4zM3 10h1v1h-1zM7 10h1v1h-1zM11 10h1v1h-1zM16 10h2v1h-2zM35 10h1v1h-1zM39 10h1v1h-1zM43 10h1v1h-1zM48 10h2v1h-2zM67 10h1v1h-1zM71 10h1v1h-1zM75 10h1v1h-1zM80 10h2v1h-2zM5 12h1v1h-1zM9 12h1v1h-1zM13 12h1v1h-1zM37 12h1v1h-1zM41 12h1v1h-1zM45 12h1v1h-1zM69 12h1v1h-1zM73 12h1v1h-1zM77 12h1v1h-1zM3 14h1v1h-1zM7 14h1v1h-1zM11 14h1v1h-1zM15 14h1v1h-1zM35 14h1v1h-1zM39 14h1v1h-1zM43 14h1v1h-1zM47 14h1v1h-1zM67 14h1v1h-1zM71 14h1v1h-1zM75 14h1v1h-1zM79 14h1v1h-1zM1 16h1v1h-1zM5 16h1v1h-1zM9 16h1v1h-1zM13 16h1v1h-1zM33 16h1v1h-1zM37 16h1v1h-1zM41 16h1v1h-1zM45 16h1v1h-1zM65 16h1v1h-1zM69 16h1v1h-1zM73 16h1v1h-1zM77 16h1v1h-1zM3 18h1v1h-1zM7 18h1v1h-1zM11 18h1v1h-1zM35 18h1v1h-1zM39 18h1v1h-1zM43 18h1v1h-1zM67 18h1v1h-1zM71 18h1v1h-1zM75 18h1v1h-1zM0 20h1v1h-1zM5 20h1v1h-1zM9 20h1v1h-1zM30 20h3v1h-3zM37 20h1v1h-1zM41 20h1v1h-1zM62 20h3v1h-3zM69 20h1v1h-1zM73 20h1v1h-1zM0 21h3v1h-3zM30 21h5v1h-5zM62 21h5v1h-5zM0 22h3v1h-3zM4 22h1v1h-1zM11 22h1v1h-1zM29 22h2v1h-2zM32 22h3v1h-3zM36 22h1v1h-1zM43 22h1v1h-1zM61 22h2v1h-2zM64 22h3v1h-3zM68 22h1v1h-1zM75 22h1v1h-1zM0 23h7v1h-7zM29 23h10v1h-10zM61 23h10v1h-10zM0 24h1v1h-1zM2 24h3v1h-3zM6 24h3v1h-3zM28 24h1v1h-1zM30 24h3v1h-3zM34 24h3v1h-3zM38 24h3v1h-3zM60 24h1v1h-1zM62 24h3v1h-3zM66 24h3v1h-3zM70 24h3v1h-3zM0 25h10v1h-10zM28 25h14v1h-14zM60 25h14v1h-14zM0 26h3v1h-3zM4 26h3v1h-3zM8 26h2v1h-2zM28 26h3v1h-3zM32 26h3v1h-3zM36 26h3v1h-3zM40 26h2v1h-2zM60 26h3v1h-3zM64 26h3v1h-3zM68 26h3v1h-3zM72 26h2v1h-2zM0 27h9v1h-9zM27 27h14v1h-14zM59 27h14v1h-14zM0 28h1v1h-1zM2 28h3v1h-3zM6 28h3v1h-3zM26 28h3v1h-3zM30 28h3v1h-3zM34 28h3v1h-3zM38 28h3v1h-3zM58 28h3v1h-3zM62 28h3v1h-3zM66 28h3v1h-3zM70 28h3v1h-3zM0 29h8v1h-8zM26 29h14v1h-14zM58 29h14v1h-14zM0 30h3v1h-3zM4 30h3v1h-3zM25 30h2v1h-2zM28 30h3v1h-3zM32 30h3v1h-3zM36 30h3v1h-3zM57 30h2v1h-2zM60 30h3v1h-3zM64 30h3v1h-3zM68 30h3v1h-3zM89 30h1v1h-1zM0 31h7v1h-7zM26 31h13v1h-13zM58 31h13v1h-13zM0 32h1v1h-1zM2 32h3v1h-3zM6 32h1v1h-1zM28 32h1v1h-1zM30 32h3v1h-3zM34 32h3v1h-3zM38 32h1v1h-1zM60 32h1v1h-1zM62 32h3v1h-3zM66 32h3v1h-3zM70 32h1v1h-1zM0 33h6v1h-6zM30 33h8v1h-8zM62 33h8v1h-8zM0 34h3v1h-3zM4 34h2v1h-2zM23 34h1v1h-1zM27 34h1v1h-1zM32 34h3v1h-3zM36 34h2v1h-2zM55 34h1v1h-1zM59 34h1v1h-1zM64 34h3v1h-3zM68 34h2v1h-2zM87 34h1v1h-1zM2 35h3v1h-3zM34 35h3v1h-3zM66 35h3v1h-3zM4 36h1v1h-1zM25 36h1v1h-1zM29 36h1v1h-1zM36 36h1v1h-1zM57 36h1v1h-1zM61 36h1v1h-1zM68 36h1v1h-1zM89 36h1v1h-1zM3 38h1v1h-1zM23 38h1v1h-1zM27 38h1v1h-1zM31 38h1v1h-1zM35 38h1v1h-1zM55 38h1v1h-1zM59 38h1v1h-1zM63 38h1v1h-1zM67 38h1v1h-1zM87 38h1v1h-1zM1 40h1v1h-1zM21 40h1v1h-1zM25 40h1v1h-1zM29 40h1v1h-1zM33 40h1v1h-1zM53 40h1v1h-1zM57 40h1v1h-1zM61 40h1v1h-1zM65 40h1v1h-1zM85 40h1v1h-1zM89 40h1v1h-1zM19 42h1v1h-1zM23 42h1v1h-1zM27 42h1v1h-1zM31 42h1v1h-1zM51 42h1v1h-1zM55 42h1v1h-1zM59 42h1v1h-1zM63 42h1v1h-1zM83 42h1v1h-1zM87 42h1v1h-1zM21 44h1v1h-1zM25 44h1v1h-1zM29 44h1v1h-1zM53 44h1v1h-1zM57 44h1v1h-1zM61 44h1v1h-1zM85 44h1v1h-1zM89 44h1v1h-1zM18 45h1v1h-1zM50 45h1v1h-1zM82 45h1v1h-1zM17 46h2v1h-2zM20 46h1v1h-1zM27 46h1v1h-1zM31 46h1v1h-1zM49 46h2v1h-2zM52 46h1v1h-1zM59 46h1v1h-1zM63 46h1v1h-1zM81 46h2v1h-2zM84 46h1v1h-1zM17 47h6v1h-6zM49 47h6v1h-6zM81 47h6v1h-6zM16 48h1v1h-1zM18 48h3v1h-3zM22 48h3v1h-3zM29 48h1v1h-1zM48 48h1v1h-1zM50 48h3v1h-3zM54 48h3v1h-3zM61 48h1v1h-1zM80 48h1v1h-1zM82 48h3v1h-3zM86 48h3v1h-3zM16 49h11v1h-11zM48 49h11v1h-11zM80 49h10v1h-10zM16 50h3v1h-3zM20 50h3v1h-3zM24 50h3v1h-3zM28 50h1v1h-1zM48 50h3v1h-3zM52 50h3v1h-3zM56 50h3v1h-3zM60 50h1v1h-1zM80 50h3v1h-3zM84 50h3v1h-3zM88 50h2v1h-2zM15 51h14v1h-14zM47 51h14v1h-14zM79 51h11v1h-11zM14 52h3v1h-3zM18 52h3v1h-3zM22 52h3v1h-3zM26 52h3v1h-3zM46 52h3v1h-3zM50 52h3v1h-3zM54 52h3v1h-3zM58 52h3v1h-3zM78 52h3v1h-3zM82 52h3v1h-3zM86 52h3v1h-3zM14 53h14v1h-14zM46 53h14v1h-14zM78 53h12v1h-12zM13 54h2v1h-2zM16 54h3v1h-3zM20 54h3v1h-3zM24 54h3v1h-3zM45 54h2v1h-2zM48 54h3v1h-3zM52 54h3v1h-3zM56 54h3v1h-3zM77 54h2v1h-2zM80 54h3v1h-3zM84 54h3v1h-3zM88 54h2v1h-2zM13 55h14v1h-14zM45 55h14v1h-14zM77 55h13v1h-13zM12 56h1v1h-1zM14 56h3v1h-3zM18 56h3v1h-3zM22 56h3v1h-3zM26 56h1v1h-1zM44 56h1v1h-1zM46 56h3v1h-3zM50 56h3v1h-3zM54 56h3v1h-3zM58 56h1v1h-1zM76 56h1v1h-1zM78 56h3v1h-3zM82 56h3v1h-3zM86 56h3v1h-3zM14 57h12v1h-12zM46 57h12v1h-12zM78 57h12v1h-12zM11 58h1v1h-1zM16 58h3v1h-3zM20 58h3v1h-3zM24 58h2v1h-2zM43 58h1v1h-1zM48 58h3v1h-3zM52 58h3v1h-3zM56 58h2v1h-2zM75 58h1v1h-1zM80 58h3v1h-3zM84 58h3v1h-3zM88 58h2v1h-2zM18 59h7v1h-7zM50 59h7v1h-7zM82 59h7v1h-7zM13 60h1v1h-1zM20 60h1v1h-1zM22 60h3v1h-3zM45 60h1v1h-1zM52 60h1v1h-1zM54 60h3v1h-3zM77 60h1v1h-1zM84 60h1v1h-1zM86 60h3v1h-3zM22 61h2v1h-2zM54 61h2v1h-2zM86 61h2v1h-2zM11 62h1v1h-1zM15 62h1v1h-1zM19 62h1v1h-1zM43 62h1v1h-1zM47 62h1v1h-1zM51 62h1v1h-1zM75 62h1v1h-1zM79 62h1v1h-1zM83 62h1v1h-1zM9 64h1v1h-1zM13 64h1v1h-1zM17 64h1v1h-1zM21 64h1v1h-1zM41 64h1v1h-1zM45 64h1v1h-1zM49 64h1v1h-1zM53 64h1v1h-1zM73 64h1v1h-1zM77 64h1v1h-1zM81 64h1v1h-1zM85 64h1v1h-1zM7 66h1v1h-1zM11 66h1v1h-1zM15 66h1v1h-1zM19 66h1v1h-1zM39 66h1v1h-1zM43 66h1v1h-1zM47 66h1v1h-1zM51 66h1v1h-1zM71 66h1v1h-1zM75 66h1v1h-1zM79 66h1v1h-1zM83 66h1v1h-1zM9 68h1v1h-1zM13 68h1v1h-1zM17 68h1v1h-1zM41 68h1v1h-1zM45 68h1v1h-1zM49 68h1v1h-1zM73 68h1v1h-1zM77 68h1v1h-1zM81 68h1v1h-1zM11 70h1v1h-1zM15 70h1v1h-1zM19 70h1v1h-1zM43 70h1v1h-1zM47 70h1v1h-1zM51 70h1v1h-1zM75 70h1v1h-1zM79 70h1v1h-1zM83 70h1v1h-1zM5 71h2v1h-2zM37 71h2v1h-2zM69 71h2v1h-2zM4 72h1v1h-1zM6 72h3v1h-3zM13 72h1v1h-1zM17 72h1v1h-1zM36 72h1v1h-1zM38 72h3v1h-3zM45 72h1v1h-1zM49 72h1v1h-1zM68 72h1v1h-1zM70 72h3v1h-3zM77 72h1v1h-1zM81 72h1v1h-1zM4 73h7v1h-7zM36 73h7v1h-7zM68 73h7v1h-7zM4 74h3v1h-3zM8 74h3v1h-3zM12 74h1v1h-1zM36 74h3v1h-3zM40 74h3v1h-3zM44 74h1v1h-1zM68 74h3v1h-3zM72 74h3v1h-3zM76 74h1v1h-1zM3 75h12v1h-12zM35 75h12v1h-12zM67 75h12v1h-12zM2 76h3v1h-3zM6 76h3v1h-3zM10 76h3v1h-3zM14 76h3v1h-3zM34 76h3v1h-3zM38 76h3v1h-3zM42 76h3v1h-3zM46 76h3v1h-3zM66 76h3v1h-3zM70 76h3v1h-3zM74 76h3v1h-3zM78 76h3v1h-3zM2 77h14v1h-14zM34 77h14v1h-14zM66 77h14v1h-14zM1 78h2v1h-2zM4 78h3v1h-3zM8 78h3v1h-3zM12 78h3v1h-3zM33 78h2v1h-2zM36 78h3v1h-3zM40 78h3v1h-3zM44 78h3v1h-3zM65 78h2v1h-2zM68 78h3v1h-3zM72 78h3v1h-3zM76 78h3v1h-3zM1 79h14v1h-14zM33 79h14v1h-14zM65 79h14v1h-14zM0 80h1v1h-1zM2 80h3v1h-3zM6 80h3v1h-3zM10 80h3v1h-3zM14 80h1v1h-1zM32 80h1v1h-1zM34 80h3v1h-3zM38 80h3v1h-3zM42 80h3v1h-3zM46 80h1v1h-1zM64 80h1v1h-1zM66 80h3v1h-3zM70 80h3v1h-3zM74 80h3v1h-3zM78 80h1v1h-1zM0 81h14v1h-14zM32 81h14v1h-14zM64 81h14v1h-14zM0 82h3v1h-3zM4 82h3v1h-3zM8 82h3v1h-3zM12 82h2v1h-2zM32 82h3v1h-3zM36 82h3v1h-3zM40 82h3v1h-3zM44 82h2v1h-2zM64 82h3v1h-3zM68 82h3v1h-3zM72 82h3v1h-3zM76 82h2v1h-2zM2 83h11v1h-11zM34 83h11v1h-11zM66 83h11v1h-11zM4 84h1v1h-1zM6 84h3v1h-3zM10 84h3v1h-3zM36 84h1v1h-1zM38 84h3v1h-3zM42 84h3v1h-3zM68 84h1v1h-1zM70 84h3v1h-3zM74 84h3v1h-3zM6 85h6v1h-6zM38 85h6v1h-6zM70 85h6v1h-6zM3 86h1v1h-1zM8 86h3v1h-3zM31 86h1v1h-1zM35 86h1v1h-1zM40 86h3v1h-3zM63 86h1v1h-1zM67 86h1v1h-1zM72 86h3v1h-3zM10 87h1v1h-1zM42 87h1v1h-1zM74 87h1v1h-1zM1 88h1v1h-1zM5 88h1v1h-1zM29 88h1v1h-1zM33 88h1v1h-1zM37 88h1v1h-1zM61 88h1v1h-1zM65 88h1v1h-1zM69 88h1v1h-1zM3 90h1v1h-1zM7 90h1v1h-1zM27 90h1v1h-1zM31 90h1v1h-1zM35 90h1v1h-1zM39 90h1v1h-1zM59 90h1v1h-1zM63 90h1v1h-1zM67 90h1v1h-1zM71 90h1v1h-1zM1 92h1v1h-1zM5 92h1v1h-1zM29 92h1v1h-1zM33 92h1v1h-1zM37 92h1v1h-1zM61 92h1v1h-1zM65 92h1v1h-1zM69 92h1v1h-1zM3 94h1v1h-1zM7 94h1v1h-1zM27 94h1v1h-1zM31 94h1v1h-1zM35 94h1v1h-1zM39 94h1v1h-1zM59 94h1v1h-1zM63 94h1v1h-1zM67 94h1v1h-1zM71 94h1v1h-1zM1 96h1v1h-1zM5 96h1v1h-1zM24 96h1v1h-1zM29 96h1v1h-1zM33 96h1v1h-1zM37 96h1v1h-1zM56 96h1v1h-1zM61 96h1v1h-1zM65 96h1v1h-1zM69 96h1v1h-1zM88 96h1v1h-1zM24 97h3v1h-3zM56 97h3v1h-3zM88 97h2v1h-2zM3 98h1v1h-1zM24 98h3v1h-3zM28 98h1v1h-1zM35 98h1v1h-1zM56 98h3v1h-3zM60 98h1v1h-1zM67 98h1v1h-1zM88 98h2v1h-2zM23 99h8v1h-8zM55 99h8v1h-8zM87 99h3v1h-3zM0 100h1v1h-1zM22 100h3v1h-3zM26 100h3v1h-3zM30 100h3v1h-3zM54 100h3v1h-3zM58 100h3v1h-3zM62 100h3v1h-3zM86 100h3v1h-3zM0 101h3v1h-3zM22 101h13v1h-13zM54 101h13v1h-13zM86 101h4v1h-4zM0 102h3v1h-3zM21 102h2v1h-2zM24 102h3v1h-3zM28 102h3v1h-3zM32 102h3v1h-3zM53 102h2v1h-2zM56 102h3v1h-3zM60 102h3v1h-3zM64 102h3v1h-3zM85 102h2v1h-2zM88 102h2v1h-2zM0 103h3v1h-3zM21 103h14v1h-14zM53 103h14v1h-14zM85 103h5v1h-5zM0 104h1v1h-1zM2 104h1v1h-1zM20 104h1v1h-1zM22 104h3v1h-3zM26 104h3v1h-3zM30 104h3v1h-3zM34 104h1v1h-1zM52 104h1v1h-1zM54 104h3v1h-3zM58 104h3v1h-3zM62 104h3v1h-3zM66 104h1v1h-1zM84 104h1v1h-1zM86 104h3v1h-3zM0 105h2v1h-2zM20 105h14v1h-14zM52 105h14v1h-14zM84 105h6v1h-6zM0 106h2v1h-2zM20 106h3v1h-3zM24 106h3v1h-3zM28 106h3v1h-3zM32 106h2v1h-2zM52 106h3v1h-3zM56 106h3v1h-3zM60 106h3v1h-3zM64 106h2v1h-2zM84 106h3v1h-3zM88 106h2v1h-2zM0 107h1v1h-1zM19 107h14v1h-14zM51 107h14v1h-14zM83 107h7v1h-7zM0 108h1v1h-1zM20 108h1v1h-1zM22 108h3v1h-3zM26 108h3v1h-3zM30 108h3v1h-3zM52 108h1v1h-1zM54 108h3v1h-3zM58 108h3v1h-3zM62 108h3v1h-3zM84 108h1v1h-1zM86 108h3v1h-3zM22 109h10v1h-10zM54 109h10v1h-10zM86 109h4v1h-4zM19 110h1v1h-1zM24 110h3v1h-3zM28 110h3v1h-3zM51 110h1v1h-1zM56 110h3v1h-3zM60 110h3v1h-3zM83 110h1v1h-1zM88 110h2v1h-2zM26 111h5v1h-5zM58 111h5v1h-5zM17 112h1v1h-1zM21 112h1v1h-1zM28 112h1v1h-1zM30 112h1v1h-1zM49 112h1v1h-1zM53 112h1v1h-1zM60 112h1v1h-1zM62 112h1v1h-1zM81 112h1v1h-1zM85 112h1v1h-1zM15 114h1v1h-1zM19 114h1v1h-1zM23 114h1v1h-1zM27 114h1v1h-1zM47 114h1v1h-1zM51 114h1v1h-1zM55 114h1v1h-1zM59 114h1v1h-1zM79 114h1v1h-1zM83 114h1v1h-1zM87 114h1v1h-1zM17 116h1v1h-1zM21 116h1v1h-1zM25 116h1v1h-1zM49 116h1v1h-1zM53 116h1v1h-1zM57 116h1v1h-1zM81 116h1v1h-1zM85 116h1v1h-1zM89 116h1v1h-1zM15 118h1v1h-1zM19 118h1v1h-1zM23 118h1v1h-1zM27 118h1v1h-1zM47 118h1v1h-1zM51 118h1v1h-1zM55 118h1v1h-1zM59 118h1v1h-1zM79 118h1v1h-1zM83 118h1v1h-1zM87 118h1v1h-1zM13 120h1v1h-1zM17 120h1v1h-1zM21 120h1v1h-1zM25 120h1v1h-1zM45 120h1v1h-1zM49 120h1v1h-1zM53 120h1v1h-1zM57 120h1v1h-1zM77 120h1v1h-1zM81 120h1v1h-1zM85 120h1v1h-1zM89 120h1v1h-1zM12 122h1v1h-1zM19 122h1v1h-1zM23 122h1v1h-1zM44 122h1v1h-1zM51 122h1v1h-1zM55 122h1v1h-1zM76 122h1v1h-1zM83 122h1v1h-1zM87 122h1v1h-1zM11 123h4v1h-4zM43 123h4v1h-4zM75 123h4v1h-4zM10 124h3v1h-3zM14 124h3v1h-3zM21 124h1v1h-1zM42 124h3v1h-3zM46 124h3v1h-3zM53 124h1v1h-1zM74 124h3v1h-3zM78 124h3v1h-3zM85 124h1v1h-1zM10 125h9v1h-9zM42 125h9v1h-9zM74 125h9v1h-9zM9 126h2v1h-2zM12 126h3v1h-3zM16 126h3v1h-3zM20 126h1v1h-1zM41 126h2v1h-2zM44 126h3v1h-3zM48 126h3v1h-3zM52 126h1v1h-1zM73 126h2v1h-2zM76 126h3v1h-3zM80 126h3v1h-3zM84 126h1v1h-1zM9 127h14v1h-14zM41 127h14v1h-14zM73 127h14v1h-14zM8 128h1v1h-1zM10 128h3v1h-3zM14 128h3v1h-3zM18 128h3v1h-3zM22 128h1v1h-1zM40 128h1v1h-1zM42 128h3v1h-3zM46 128h3v1h-3zM50 128h3v1h-3zM54 128h1v1h-1zM72 128h1v1h-1zM74 128h3v1h-3zM78 128h3v1h-3zM82 128h3v1h-3zM86 128h1v1h-1zM8 129h14v1h-14zM40 129h14v1h-14zM72 129h14v1h-14zM8 130h3v1h-3zM12 130h3v1h-3zM16 130h3v1h-3zM20 130h2v1h-2zM40 130h3v1h-3zM44 130h3v1h-3zM48 130h3v1h-3zM52 130h2v1h-2zM72 130h3v1h-3zM76 130h3v1h-3zM80 130h3v1h-3zM84 130h2v1h-2zM7 131h14v1h-14zM39 131h14v1h-14zM71 131h14v1h-14zM6 132h3v1h-3zM10 132h3v1h-3zM14 132h3v1h-3zM18 132h3v1h-3zM38 132h3v1h-3zM42 132h3v1h-3zM46 132h3v1h-3zM50 132h3v1h-3zM70 132h3v1h-3zM74 132h3v1h-3zM78 132h3v1h-3zM82 132h3v1h-3zM6 133h14v1h-14zM38 133h14v1h-14zM70 133h14v1h-14zM8 134h3v1h-3zM12 134h3v1h-3zM16 134h3v1h-3zM40 134h3v1h-3zM44 134h3v1h-3zM48 134h3v1h-3zM72 134h3v1h-3zM76 134h3v1h-3zM80 134h3v1h-3zM10 135h9v1h-9zM42 135h9v1h-9zM74 135h9v1h-9zM5 136h1v1h-1zM12 136h1v1h-1zM14 136h3v1h-3zM18 136h1v1h-1zM37 136h1v1h-1zM44 136h1v1h-1zM46 136h3v1h-3zM50 136h1v1h-1zM69 136h1v1h-1zM76 136h1v1h-1zM78 136h3v1h-3zM82 136h1v1h-1zM14 137h4v1h-4zM46 137h4v1h-4zM78 137h4v1h-4zM3 138h1v1h-1zM7 138h1v1h-1zM11 138h1v1h-1zM16 138h2v1h-2zM35 138h1v1h-1zM39 138h1v1h-1zM43 138h1v1h-1zM48 138h2v1h-2zM67 138h1v1h-1zM71 138h1v1h-1zM75 138h1v1h-1zM80 138h2v1h-2zM5 140h1v1h-1zM9 140h1v1h-1zM13 140h1v1h-1zM37 140h1v1h-1zM41 140h1v1h-1zM45 140h1v1h-1zM69 140h1v1h-1zM73 140h1v1h-1zM77 140h1v1h-1zM3 142h1v1h-1zM7 142h1v1h-1zM11 142h1v1h-1zM15 142h1v1h-1zM35 142h1v1h-1zM39 142h1v1h-1zM43 142h1v1h-1zM47 142h1v1h-1zM67 142h1v1h-1zM71 142h1v1h-1zM75 142h1v1h-1zM79 142h1v1h-1zM1 144h1v1h-1zM5 144h1v1h-1zM9 144h1v1h-1zM13 144h1v1h-1zM33 144h1v1h-1zM37 144h1v1h-1zM41 144h1v1h-1zM45 144h1v1h-1zM65 144h1v1h-1zM69 144h1v1h-1zM73 144h1v1h-1zM77 144h1v1h-1zM3 146h1v1h-1zM7 146h1v1h-1zM11 146h1v1h-1zM35 146h1v1h-1zM39 146h1v1h-1zM43 146h1v1h-1zM67 146h1v1h-1zM71 146h1v1h-1zM75 146h1v1h-1zM0 148h1v1h-1zM5 148h1v1h-1zM9 148h1v1h-1zM30 148h3v1h-3zM37 148h1v1h-1zM41 148h1v1h-1zM62 148h3v1h-3zM69 148h1v1h-1zM73 148h1v1h-1zM0 149h3v1h-3zM30 149h5v1h-5zM62 149h5v1h-5zM0 150h3v1h-3zM4 150h1v1h-1zM11 150h1v1h-1zM29 150h2v1h-2zM32 150h3v1h-3zM36 150h1v1h-1zM43 150h1v1h-1zM61 150h2v1h-2zM64 150h3v1h-3zM68 150h1v1h-1zM75 150h1v1h-1zM0 151h7v1h-7zM29 151h10v1h-10zM61 151h10v1h-10zM0 152h1v1h-1zM2 152h3v1h-3zM6 152h3v1h-3zM28 152h1v1h-1zM30 152h3v1h-3zM34 152h3v1h-3zM38 152h3v1h-3zM60 152h1v1h-1zM62 152h3v1h-3zM66 152h3v1h-3zM70 152h3v1h-3zM0 153h10v1h-10zM28 153h14v1h-14zM60 153h14v1h-14zM0 154h3v1h-3zM4 154h3v1h-3zM8 154h2v1h-2zM28 154h3v1h-3zM32 154h3v1h-3zM36 154h3v1h-3zM40 154h2v1h-2zM60 154h3v1h-3zM64 154h3v1h-3zM68 154h3v1h-3zM72 154h2v1h-2zM0 155h9v1h-9zM27 155h14v1h-14zM59 155h14v1h-14zM0 156h1v1h-1zM2 156h3v1h-3zM6 156h3v1h-3zM26 156h3v1h-3zM30 156h3v1h-3zM34 156h3v1h-3zM38 156h3v1h-3zM58 156h3v1h-3zM62 156h3v1h-3zM66 156h3v1h-3zM70 156h3v1h-3zM0 157h8v1h-8zM26 157h14v1h-14zM58 157h14v1h-14zM0 158h3v1h-3zM4 158h3v1h-3zM25 158h2v1h-2zM28 158h3v1h-3zM32 158h3v1h-3zM36 158h3v1h-3zM57 158h2v1h-2zM60 158h3v1h-3zM64 158h3v1h-3zM68 158h3v1h-3zM89 158h1v1h-1zM0 159h7v1h-7zM26 159h13v1h-13zM58 159h13v1h-13z"/><path fill="#ec3664" d="M0 0h1v1h-1zM2 0h3v1h-3zM6 0h1v1h-1zM28 0h1v1h-1zM30 0h3v1h-3zM34 0h3v1h-3zM38 0h1v1h-1zM60 0h1v1h-1zM62 0h3v1h-3zM66 0h3v1h-3zM70 0h1v1h-1zM0 1h6v1h-6zM30 1h8v1h-8zM62 1h8v1h-8zM0 2h3v1h-3zM4 2h2v1h-2zM32 2h3v1h-3zM36 2h2v1h-2zM64 2h3v1h-3zM68 2h2v1h-2zM2 3h3v1h-3zM34 3h3v1h-3zM66 3h3v1h-3zM4 4h1v1h-1zM36 4h1v1h-1zM68 4h1v1h-1zM18 13h1v1h-1zM50 13h1v1h-1zM82 13h1v1h-1zM17 14h2v1h-2zM20 14h1v1h-1zM49 14h2v1h-2zM52 14h1v1h-1zM81 14h2v1h-2zM84 14h1v1h-1zM17 15h6v1h-6zM49 15h6v1h-6zM81 15h6v1h-6zM16 16h1v1h-1zM18 16h3v1h-3zM22 16h3v1h-3zM48 16h1v1h-1zM50 16h3v1h-3zM54 16h3v1h-3zM80 16h1v1h-1zM82 16h3v1h-3zM86 16h3v1h-3zM16 17h11v1h-11zM48 17h11v1h-11zM80 17h10v1h-10zM16 18h3v1h-3zM20 18h3v1h-3zM24 18h3v1h-3zM28 18h1v1h-1zM48 18h3v1h-3zM52 18h3v1h-3zM56 18h3v1h-3zM60 18h1v1h-1zM80 18h3v1h-3zM84 18h3v1h-3zM88 18h2v1h-2zM15 19h14v1h-14zM47 19h14v1h-14zM79 19h11v1h-11zM14 20h3v1h-3zM18 20h3v1h-3zM22 20h3v1h-3zM26 20h3v1h-3zM46 20h3v1h-3zM50 20h3v1h-3zM54 20h3v1h-3zM58 20h3v1h-3zM78 20h3v1h-3zM82 20h3v1h-3zM86 20h3v1h-3zM14 21h14v1h-14zM46 21h14v1h-14zM78 21h12v1h-12zM13 22h2v1h-2zM16 22h3v1h-3zM20 22h3v1h-3zM24 22h3v1h-3zM45 22h2v1h-2zM48 22h3v1h-3zM52 22h3v1h-3zM56 22h3v1h-3zM77 22h2v1h-2zM80 22h3v1h-3zM84 22h3v1h-3zM88 22h2v1h-2zM13 23h14v1h-14zM45 23h14v1h-14zM77 23h13v1h-13zM12 24h1v1h-1zM14 24h3v1h-3zM18 24h3v1h-3zM22 24h3v1h-3zM26 24h1v1h-1zM44 24h1v1h-1zM46 24h3v1h-3zM50 24h3v1h-3zM54 24h3v1h-3zM58 24h1v1h-1zM76 24h1v1h-1zM78 24h3v1h-3zM82 24h3v1h-3zM86 24h3v1h-3zM14 25h12v1h-12zM46 25h12v1h-12zM78 25h12v1h-12zM16 26h3v1h-3zM20 26h3v1h-3zM24 26h2v1h-2zM48 26h3v1h-3zM52 26h3v1h-3zM56 26h2v1h-2zM80 26h3v1h-3zM84 26h3v1h-3zM88 26h2v1h-2zM18 27h7v1h-7zM50 27h7v1h-7zM82 27h7v1h-7zM20 28h1v1h-1zM22 28h3v1h-3zM52 28h1v1h-1zM54 28h3v1h-3zM84 28h1v1h-1zM86 28h3v1h-3zM22 29h2v1h-2zM54 29h2v1h-2zM86 29h2v1h-2zM5 39h2v1h-2zM37 39h2v1h-2zM69 39h2v1h-2zM4 40h1v1h-1zM6 40h3v1h-3zM36 40h1v1h-1zM38 40h3v1h-3zM68 40h1v1h-1zM70 40h3v1h-3zM4 41h7v1h-7zM36 41h7v1h-7zM68 41h7v1h-7zM4 42h3v1h-3zM8 42h3v1h-3zM12 42h1v1h-1zM36 42h3v1h-3zM40 42h3v1h-3zM44 42h1v1h-1zM68 42h3v1h-3zM72 42h3v1h-3zM76 42h1v1h-1zM3 43h12v1h-12zM35 43h12v1h-12zM67 43h12v1h-12zM2 44h3v1h-3zM6 44h3v1h-3zM10 44h3v1h-3zM14 44h3v1h-3zM34 44h3v1h-3zM38 44h3v1h-3zM42 44h3v1h-3zM46 44h3v1h-3zM66 44h3v1h-3zM70 44h3v1h-3zM74 44h3v1h-3zM78 44h3v1h-3zM2 45h14v1h-14zM34 45h14v1h-14zM66 45h14v1h-14zM1 46h2v1h-2zM4 46h3v1h-3zM8 46h3v1h-3zM12 46h3v1h-3zM33 46h2v1h-2zM36 46h3v1h-3zM40 46h3v1h-3zM44 46h3v1h-3zM65 46h2v1h-2zM68 46h3v1h-3zM72 46h3v1h-3zM76 46h3v1h-3zM1 47h14v1h-14zM33 47h14v1h-14zM65 47h14v1h-14zM0 48h1v1h-1zM2 48h3v1h-3zM6 48h3v1h-3zM10 48h3v1h-3zM14 48h1v1h-1zM32 48h1v1h-1zM34 48h3v1h-3zM38 48h3v1h-3zM42 48h3v1h-3zM46 48h1v1h-1zM64 48h1v1h-1zM66 48h3v1h-3zM70 48h3v1h-3zM74 48h3v1h-3zM78 48h1v1h-1zM0 49h14v1h-14zM32 49h14v1h-14zM64 49h14v1h-14zM0 50h3v1h-3zM4 50h3v1h-3zM8 50h3v1h-3zM12 50h2v1h-2zM32 50h3v1h-3zM36 50h3v1h-3zM40 50h3v1h-3zM44 50h2v1h-2zM64 50h3v1h-3zM68 50h3v1h-3zM72 50h3v1h-3zM76 50h2v1h-2zM2 51h11v1h-11zM34 51h11v1h-11zM66 51h11v1h-11zM4 52h1v1h-1zM6 52h3v1h-3zM10 52h3v1h-3zM36 52h1v1h-1zM38 52h3v1h-3zM42 52h3v1h-3zM68 52h1v1h-1zM70 52h3v1h-3zM74 52h3v1h-3zM6 53h6v1h-6zM38 53h6v1h-6zM70 53h6v1h-6zM8 54h3v1h-3zM40 54h3v1h-3zM72 54h3v1h-3zM10 55h1v1h-1zM42 55h1v1h-1zM74 55h1v1h-1zM24 64h1v1h-1zM56 64h1v1h-1zM88 64h1v1h-1zM24 65h3v1h-3zM56 65h3v1h-3zM88 65h2v1h-2zM24 66h3v1h-3zM28 66h1v1h-1zM56 66h3v1h-3zM60 66h1v1h-1zM88 66h2v1h-2zM23 67h8v1h-8zM55 67h8v1h-8zM87 67h3v1h-3zM0 68h1v1h-1zM22 68h3v1h-3zM26 68h3v1h-3zM30 68h3v1h-3zM54 68h3v1h-3zM58 68h3v1h-3zM62 68h3v1h-3zM86 68h3v1h-3zM0 69h3v1h-3zM22 69h13v1h-13zM54 69h13v1h-13zM86 69h4v1h-4zM0 70h3v1h-3zM21 70h2v1h-2zM24 70h3v1h-3zM28 70h3v1h-3zM32 70h3v1h-3zM53 70h2v1h-2zM56 70h3v1h-3zM60 70h3v1h-3zM64 70h3v1h-3zM85 70h2v1h-2zM88 70h2v1h-2zM0 71h3v1h-3zM21 71h14v1h-14zM53 71h14v1h-14zM85 71h5v1h-5zM0 72h1v1h-1zM2 72h1v1h-1zM20 72h1v1h-1zM22 72h3v1h-3zM26 72h3v1h-3zM30 72h3v1h-3zM34 72h1v1h-1zM52 72h1v1h-1zM54 72h3v1h-3zM58 72h3v1h-3zM62 72h3v1h-3zM66 72h1v1h-1zM84 72h1v1h-1zM86 72h3v1h-3zM0 73h2v1h-2zM20 73h14v1h-14zM52 73h14v1h-14zM84 73h6v1h-6zM0 74h2v1h-2zM20 74h3v1h-3zM24 74h3v1h-3zM28 74h3v1h-3zM32 74h2v1h-2zM52 74h3v1h-3zM56 74h3v1h-3zM60 74h3v1h-3zM64 74h2v1h-2zM84 74h3v1h-3zM88 74h2v1h-2zM0 75h1v1h-1zM19 75h14v1h-14zM51 75h14v1h-14zM83 75h7v1h-7zM0 76h1v1h-1zM20 76h1v1h-1zM22 76h3v1h-3zM26 76h3v1h-3zM30 76h3v1h-3zM52 76h1v1h-1zM54 76h3v1h-3zM58 76h3v1h-3zM62 76h3v1h-3zM84 76h1v1h-1zM86 76h3v1h-3zM22 77h10v1h-10zM54 77h10v1h-10zM86 77h4v1h-4zM24 78h3v1h-3zM28 78h3v1h-3zM56 78h3v1h-3zM60 78h3v1h-3zM88 78h2v1h-2zM26 79h5v1h-5zM58 79h5v1h-5zM28 80h1v1h-1zM30 80h1v1h-1zM60 80h1v1h-1zM62 80h1v1h-1zM12 90h1v1h-1zM44 90h1v1h-1zM76 90h1v1h-1zM11 91h4v1h-4zM43 91h4v1h-4zM75 91h4v1h-4zM10 92h3v1h-3zM14 92h3v1h-3zM42 92h3v1h-3zM46 92h3v1h-3zM74 92h3v1h-3zM78 92h3v1h-3zM10 93h9v1h-9zM42 93h9v1h-9zM74 93h9v1h-9zM9 94h2v1h-2zM12 94h3v1h-3zM16 94h3v1h-3zM20 94h1v1h-1zM41 94h2v1h-2zM44 94h3v1h-3zM48 94h3v1h-3zM52 94h1v1h-1zM73 94h2v1h-2zM76 94h3v1h-3zM80 94h3v1h-3zM84 94h1v1h-1zM9 95h14v1h-14zM41 95h14v1h-14zM73 95h14v1h-14zM8 96h1v1h-1zM10 96h3v1h-3zM14 96h3v1h-3zM18 96h3v1h-3zM22 96h1v1h-1zM40 96h1v1h-1zM42 96h3v1h-3zM46 96h3v1h-3zM50 96h3v1h-3zM54 96h1v1h-1zM72 96h1v1h-1zM74 96h3v1h-3zM78 96h3v1h-3zM82 96h3v1h-3zM86 96h1v1h-1zM8 97h14v1h-14zM40 97h14v1h-14zM72 97h14v1h-14zM8 98h3v1h-3zM12 98h3v1h-3zM16 98h3v1h-3zM20 98h2v1h-2zM40 98h3v1h-3zM44 98h3v1h-3zM48 98h3v1h-3zM52 98h2v1h-2zM72 98h3v1h-3zM76 98h3v1h-3zM80 98h3v1h-3zM84 98h2v1h-2zM7 99h14v1h-14zM39 99h14v1h-14zM71 99h14v1h-14zM6 100h3v1h-3zM10 100h3v1h-3zM14 100h3v1h-3zM18 100h3v1h-3zM38 100h3v1h-3zM42 100h3v1h-3zM46 100h3v1h-3zM50 100h3v1h-3zM70 100h3v1h-3zM74 100h3v1h-3zM78 100h3v1h-3zM82 100h3v1h-3zM6 101h14v1h-14zM38 101h14v1h-14zM70 101h14v1h-14zM8 102h3v1h-3zM12 102h3v1h-3zM16 102h3v1h-3zM40 102h3v1h-3zM44 102h3v1h-3zM48 102h3v1h-3zM72 102h3v1h-3zM76 102h3v1h-3zM80 102h3v1h-3zM10 103h9v1h-9zM42 103h9v1h-9zM74 103h9v1h-9zM12 104h1v1h-1zM14 104h3v1h-3zM18 104h1v1h-1zM44 104h1v1h-1zM46 104h3v1h-3zM50 104h1v1h-1zM76 104h1v1h-1zM78 104h3v1h-3zM82 104h1v1h-1zM14 105h4v1h-4zM46 105h4v1h-4zM78 105h4v1h-4zM16 106h2v1h-2zM48 106h2v1h-2zM80 106h2v1h-2zM0 116h1v1h-1zM30 116h3v1h-3zM62 116h3v1h-3zM0 117h3v1h-3zM30 117h5v1h-5zM62 117h5v1h-5zM0 118h3v1h-3zM4 118h1v1h-1zM29 118h2v1h-2zM32 118h3v1h-3zM36 118h1v1h-1zM61 118h2v1h-2zM64 118h3v1h-3zM68 118h1v1h-1zM0 119h7v1h-7zM29 119h10v1h-10zM61 119h10v1h-10zM0 120h1v1h-1zM2 120h3v1h-3zM6 120h3v1h-3zM28 120h1v1h-1zM30 120h3v1h-3zM34 120h3v1h-3zM38 120h3v1h-3zM60 120h1v1h-1zM62 120h3v1h-3zM66 120h3v1h-3zM70 120h3v1h-3zM0 121h10v1h-10zM28 121h14v1h-14zM60 121h14v1h-14zM0 122h3v1h-3zM4 122h3v1h-3zM8 122h2v1h-2zM28 122h3v1h-3zM32 122h3v1h-3zM36 122h3v1h-3zM40 122h2v1h-2zM60 122h3v1h-3zM64 122h3v1h-3zM68 122h3v1h-3zM72 122h2v1h-2zM0 123h9v1h-9zM27 123h14v1h-14zM59 123h14v1h-14zM0 124h1v1h-1zM2 124h3v1h-3zM6 124h3v1h-3zM26 124h3v1h-3zM30 124h3v1h-3zM34 124h3v1h-3zM38 124h3v1h-3zM58 124h3v1h-3zM62 124h3v1h-3zM66 124h3v1h-3zM70 124h3v1h-3zM0 125h8v1h-8zM26 125h14v1h-14zM58 125h14v1h-14zM0 126h3v1h-3zM4 126h3v1h-3zM25 126h2v1h-2zM28 126h3v1h-3zM32 126h3v1h-3zM36 126h3v1h-3zM57 126h2v1h-2zM60 126h3v1h-3zM64 126h3v1h-3zM68 126h3v1h-3zM89 126h1v1h-1zM0 127h7v1h-7zM26 127h13v1h-13zM58 127h13v1h-13zM0 128h1v1h-1zM2 128h3v1h-3zM6 128h1v1h-1zM28 128h1v1h-1zM30 128h3v1h-3zM34 128h3v1h-3zM38 128h1v1h-1zM60 128h1v1h-1zM62 128h3v1h-3zM66 128h3v1h-3zM70 128h1v1h-1zM0 129h6v1h-6zM30 129h8v1h-8zM62 129h8v1h-8zM0 130h3v1h-3zM4 130h2v1h-2zM32 130h3v1h-3zM36 130h2v1h-2zM64 130h3v1h-3zM68 130h2v1h-2zM2 131h3v1h-3zM34 131h3v1h-3zM66 131h3v1h-3zM4 132h1v1h-1zM36 132h1v1h-1zM68 132h1v1h-1zM18 141h1v1h-1zM50 141h1v1h-1zM82 141h1v1h-1zM17 142h2v1h-2zM20 142h1v1h-1zM49 142h2v1h-2zM52 142h1v1h-1zM81 142h2v1h-2zM84 142h1v1h-1zM17 143h6v1h-6zM49 143h6v1h-6zM81 143h6v1h-6zM16 144h1v1h-1zM18 144h3v1h-3zM22 144h3v1h-3zM48 144h1v1h-1zM50 144h3v1h-3zM54 144h3v1h-3zM80 144h1v1h-1zM82 144h3v1h-3zM86 144h3v1h-3zM16 145h11v1h-11zM48 145h11v1h-11zM80 145h10v1h-10zM16 146h3v1h-3zM20 146h3v1h-3zM24 146h3v1h-3zM28 146h1v1h-1zM48 146h3v1h-3zM52 146h3v1h-3zM56 146h3v1h-3zM60 146h1v1h-1zM80 146h3v1h-3zM84 146h3v1h-3zM88 146h2v1h-2zM15 147h14v1h-14zM47 147h14v1h-14zM79 147h11v1h-11zM14 148h3v1h-3zM18 148h3v1h-3zM22 148h3v1h-3zM26 148h3v1h-3zM46 148h3v1h-3zM50 148h3v1h-3zM54 148h3v1h-3zM58 148h3v1h-3zM78 148h3v1h-3zM82 148h3v1h-3zM86 148h3v1h-3zM14 149h14v1h-14zM46 149h14v1h-14zM78 149h12v1h-12zM13 150h2v1h-2zM16 150h3v1h-3zM20 150h3v1h-3zM24 150h3v1h-3zM45 150h2v1h-2zM48 150h3v1h-3zM52 150h3v1h-3zM56 150h3v1h-3zM77 150h2v1h-2zM80 150h3v1h-3zM84 150h3v1h-3zM88 150h2v1h-2zM13 151h14v1h-14zM45 151h14v1h-14zM77 151h13v1h-13zM12 152h1v1h-1zM14 152h3v1h-3zM18 152h3v1h-3zM22 152h3v1h-3zM26 152h1v1h-1zM44 152h1v1h-1zM46 152h3v1h-3zM50 152h3v1h-3zM54 152h3v1h-3zM58 152h1v1h-1zM76 152h1v1h-1zM78 152h3v1h-3zM82 152h3v1h-3zM86 152h3v1h-3zM14 153h12v1h-12zM46 153h12v1h-12zM78 153h12v1h-12zM16 154h3v1h-3zM20 154h3v1h-3zM24 154h2v1h-2zM48 154h3v1h-3zM52 154h3v1h-3zM56 154h2v1h-2zM80 154h3v1h-3zM84 154h3v1h-3zM88 154h2v1h-2zM18 155h7v1h-7zM50 155h7v1h-7zM82 155h7v1h-7zM20 156h1v1h-1zM22 156h3v1h-3zM52 156h1v1h-1zM54 156h3v1h-3zM84 156h1v1h-1zM86 156h3v1h-3zM22 157h2v1h-2zM54 157h2v1h-2zM86 157h2v1h-2z"/></svg>
<span class="t" style="left:1427.50px;top:953.92px;font-size:19px;line-height:19px;color:#000;font-family:'Liberation Sans', sans-serif;transform:scale(0.8859,1);transform-origin:0 16.08px;">Canvas Size</span>
<div style="left:1532px;top:948px;width:294px;height:30px;background:#c9c9cb;border:2px dotted #000;"></div>
<span class="t" style="left:1535.50px;top:953.92px;font-size:19px;line-height:19px;color:#000;font-family:'Liberation Sans', sans-serif;transform:scale(1.0897,1);transform-origin:0 16.08px;">Portrait (tiny)</span>
<svg style="left:1805px;top:958px" width="10" height="9" viewBox="0 0 10 9"><path d="M1 1.5 L5 6.5 L9 1.5" fill="none" stroke="#000" stroke-width="2.2"/></svg>
<span class="t" style="left:1833.00px;top:953.92px;font-size:19px;line-height:19px;color:#000;font-family:'Liberation Sans', sans-serif;transform:scale(0.9053,1);transform-origin:0 16.08px;">90 x 160</span>
<div style="left:1428px;top:986px;width:160px;height:38px;background:#c9c9cb;border:2px dotted #000;"></div>
<span class="t" style="left:1430.50px;top:995.32px;font-size:19px;line-height:19px;color:#000;font-family:'Liberation Sans', sans-serif;transform:scale(0.9420,1);transform-origin:0 16.08px;">Is Animation</span>
<div style="left:1538px;top:993.5px;width:46px;height:23.5px;background:#6e6862;border:2px solid #000;border-radius:5px;"></div>
<div style="left:1538px;top:993.5px;width:24.5px;height:23.5px;background:#d6d6d8;border:2px solid #000;border-radius:5px;box-shadow:inset 1.5px 1.5px 0 #fff, inset -1.5px -1.5px 0 #9a9a9c;"></div>
<span class="t" style="left:1643.50px;top:995.32px;font-size:19px;line-height:19px;color:#000;font-family:'Liberation Sans', sans-serif;transform:scale(0.9034,1);transform-origin:0 16.08px;">0 Frames</span>
<span class="t" style="left:1831.30px;top:995.32px;font-size:19px;line-height:19px;color:#000;font-family:'Liberation Sans', sans-serif;transform:scale(0.7858,1);transform-origin:0 16.08px;">0 FPS</span>
<svg style="left:1726px;top:990px" width="12" height="28" viewBox="0 0 12 28"><path d="M1.5 8 L6 3 L10.5 8" fill="none" stroke="#222" stroke-width="2.2"/><path d="M1.5 19 L6 24 L10.5 19" fill="none" stroke="#b9b3ad" stroke-width="2.2"/></svg>
<svg style="left:1881.5px;top:990px" width="12" height="28" viewBox="0 0 12 28"><path d="M1.5 8 L6 3 L10.5 8" fill="none" stroke="#222" stroke-width="2.2"/><path d="M1.5 19 L6 24 L10.5 19" fill="none" stroke="#b9b3ad" stroke-width="2.2"/></svg>
<div style="left:1595px;top:1020.5px;width:122.5px;height:2.5px;background:#d9d2cc;"></div>
<div style="left:1752.5px;top:1020.5px;width:121px;height:2.5px;background:#d9d2cc;"></div>
<div style="left:1428px;top:1032.5px;width:472px;height:29.5px;background:#c9c9cb;border:2px dotted #000;"></div>
<span class="t" style="left:1593.00px;top:1037.92px;font-size:19px;line-height:19px;color:#000;font-family:'Liberation Sans', sans-serif;transform:scale(0.8269,1);transform-origin:0 16.08px;">EXPORT AS PNG...</span>
<span class="t" style="left:1599.00px;top:1031.92px;font-size:19px;line-height:19px;color:#cdcdd0;font-family:'Liberation Sans', sans-serif;transform:scale(0.9792,1);transform-origin:0 16.08px;text-shadow:-1.5px 0 #2a2a2a,1.5px 0 #2a2a2a,0 -1.5px #2a2a2a,0 1.5px #2a2a2a,-1px -1px #2a2a2a,1px 1px #2a2a2a,1px -1px #2a2a2a,-1px 1px #2a2a2a, 2px 2px #2a2a2a;">Playtest Version 03B (January 2025)</span>
<div style="left:0px;top:0px;width:1920px;height:49.5px;background:#2e2e2e;"></div>
<div style="left:0px;top:49px;width:1920px;height:3px;background:#000;"></div>
<svg style="left:14px;top:4px" width="40" height="40" viewBox="14 4 40 40" fill="none" stroke="#d9d9d9" stroke-width="1.8"><rect x="17" y="7" width="34.5" height="26"/><rect x="21" y="11" width="27" height="18"/><path d="M25 21 L31.5 14.5"/><rect x="17" y="34.5" width="34.5" height="7"/><path d="M40 38 L48 38"/><rect x="20" y="37" width="2" height="2" fill="#c0304a" stroke="none"/></svg>
<svg style="left:80px;top:2px" width="42" height="42" viewBox="80 2 42 42" fill="none" stroke="#d9d9d9" stroke-width="1.8"><path d="M118.5 22.8 L118.4 24.3 L117.7 25.8 L115.5 26.7 L113.2 27.2 L112.3 28.1 L111.8 29.1 L111.2 30.0 L111.0 31.2 L111.6 33.4 L111.9 35.8 L111.0 37.1 L109.8 38.0 L108.4 38.7 L106.8 38.8 L104.9 37.3 L103.3 35.6 L102.1 35.3 L101.0 35.3 L99.9 35.3 L98.7 35.6 L97.1 37.3 L95.2 38.8 L93.6 38.7 L92.2 38.0 L91.0 37.1 L90.1 35.8 L90.4 33.4 L91.0 31.2 L90.8 30.0 L90.2 29.1 L89.7 28.1 L88.8 27.2 L86.5 26.7 L84.3 25.8 L83.6 24.3 L83.5 22.8 L83.6 21.3 L84.3 19.8 L86.5 18.9 L88.8 18.4 L89.7 17.5 L90.2 16.5 L90.8 15.6 L91.0 14.4 L90.4 12.2 L90.1 9.8 L91.0 8.5 L92.2 7.6 L93.6 6.9 L95.2 6.8 L97.1 8.3 L98.7 10.0 L99.9 10.3 L101.0 10.3 L102.1 10.3 L103.3 10.0 L104.9 8.3 L106.8 6.8 L108.4 6.9 L109.7 7.6 L111.0 8.5 L111.9 9.8 L111.6 12.2 L111.0 14.4 L111.2 15.6 L111.8 16.6 L112.3 17.5 L113.2 18.4 L115.5 18.9 L117.7 19.8 L118.4 21.3 L118.5 22.8Z"/><circle cx="101" cy="22.8" r="6"/><rect x="100" y="21.8" width="2" height="2" fill="#d9d9d9" stroke="none"/></svg>
<svg style="left:148px;top:4px" width="40" height="40" viewBox="148 4 40 40" fill="none" stroke="#d9d9d9" stroke-width="1.8"><path d="M151 7 L183 7 L183 34 L176 41 L151 41 Z"/><path d="M176 41 L176 34 L183 34"/><path d="M165 17 L169 17 L169 21 L173 21 L173 25 L169 25 L169 29 L165 29 L165 25 L161 25 L161 21 L165 21 Z"/></svg>
<svg style="left:794px;top:0px" width="48" height="48" viewBox="794 0 48 48"><rect x="810.5" y="36" width="6" height="12" fill="#f78a2c" stroke="#000" stroke-width="1.6"/><rect x="818" y="38" width="6" height="10" fill="#f78a2c" stroke="#000" stroke-width="1.6"/><rect x="811.3" y="36" width="4.4" height="6" fill="#b0308c"/><rect x="818.8" y="38" width="4.4" height="4" fill="#b0308c"/><path d="M802 10 Q802 1 811 1 L822 5 L834 11 Q838 14 838 20 L838 34 L822 40 L802 30 Z" fill="#33aaf5" stroke="#000" stroke-width="2.2" stroke-linejoin="round"/><path d="M803 16 L822 25 M822 40 L823 20 Q824 12 830 10" fill="none" stroke="#000" stroke-width="2"/><path d="M797 20 L806 22 L807 28 L803 37 L800 36 L801 27 L797 25 Z" fill="#f5054e"/><path d="M805 25 L816 30" stroke="#7a3ad0" stroke-width="3"/><path d="M814 29 L820 33" stroke="#000" stroke-width="3.5"/><path d="M827 32 L827 21 L832 20 L833 25 L827 27" fill="none" stroke="#000" stroke-width="2"/></svg>
<svg style="left:860px;top:0px" width="60" height="48" viewBox="860 0 60 48"><ellipse cx="879" cy="25" rx="15" ry="5" fill="#4a6ea8" opacity="0.8"/><rect x="866" y="32" width="47" height="16" fill="#4a6ea8"/><path d="M866 37.5 H913 M866 43 H913 M872 32 V48" stroke="#34507f" stroke-width="1.6"/><path d="M879 2.5 L893.0 9.25 L893.0 20.75 L879 27.5 L865.0 20.75 L865.0 9.25 Z" fill="#000" stroke="#000" stroke-width="2.5" stroke-linejoin="round"/><path d="M879 2.5 L893.0 9.25 L879 16.0 L865.0 9.25 Z" fill="#fde24a"/><path d="M865.0 9.25 L879 16.0 L879 27.5 L865.0 20.75 Z" fill="#f78a2c"/><path d="M893.0 9.25 L879 16.0 L879 27.5 L893.0 20.75 Z" fill="#fddc3c"/><path d="M865.0 9.25 L879 16.0 L893.0 9.25 M879 16.0 L879 27.5" fill="none" stroke="#000" stroke-width="1.8"/><path d="M879 3.5 L889.5 8.575 L883.2 6.55 Z" fill="#fff" opacity="0.85"/><rect x="899" y="3" width="16" height="18" fill="#fbf4f0" stroke="#000" stroke-width="2.2"/><path d="M901.5 11 L906 17 L913 5" fill="none" stroke="#3f9e59" stroke-width="3.2"/></svg>
<svg style="left:932px;top:0px" width="58" height="48" viewBox="932 0 58 48"><path d="M961 2.5 L972.5 8.440000000000001 L972.5 18.56 L961 24.5 L949.5 18.56 L949.5 8.440000000000001 Z" fill="#000" stroke="#000" stroke-width="2.5" stroke-linejoin="round"/><path d="M961 2.5 L972.5 8.440000000000001 L961 14.38 L949.5 8.440000000000001 Z" fill="#fde24a"/><path d="M949.5 8.440000000000001 L961 14.38 L961 24.5 L949.5 18.56 Z" fill="#f78a2c"/><path d="M972.5 8.440000000000001 L961 14.38 L961 24.5 L972.5 18.56 Z" fill="#fddc3c"/><path d="M949.5 8.440000000000001 L961 14.38 L972.5 8.440000000000001 M961 14.38 L961 24.5" fill="none" stroke="#000" stroke-width="1.8"/><path d="M961 3.5 L969.625 7.846 L964.45 6.064 Z" fill="#fff" opacity="0.85"/><path d="M950 22 L962 28 L972 23 L972 26 L962 31 L950 25 Z" fill="#2a50c8"/><path d="M948.5 24 L959.5 30.75 L959.5 42.25 L948.5 49 L937.5 42.25 L937.5 30.75 Z" fill="#000" stroke="#000" stroke-width="2.5" stroke-linejoin="round"/><path d="M948.5 24 L959.5 30.75 L948.5 37.5 L937.5 30.75 Z" fill="#c8287a"/><path d="M937.5 30.75 L948.5 37.5 L948.5 49 L937.5 42.25 Z" fill="#f5054e"/><path d="M959.5 30.75 L948.5 37.5 L948.5 49 L959.5 42.25 Z" fill="#f5054e"/><path d="M937.5 30.75 L948.5 37.5 L959.5 30.75 M948.5 37.5 L948.5 49" fill="none" stroke="#000" stroke-width="1.8"/><path d="M959 34 L964 34 L964 48 L959 48 Z" fill="#8a7a78"/><path d="M974.5 24 L985.5 30.75 L985.5 42.25 L974.5 49 L963.5 42.25 L963.5 30.75 Z" fill="#000" stroke="#000" stroke-width="2.5" stroke-linejoin="round"/><path d="M974.5 24 L985.5 30.75 L974.5 37.5 L963.5 30.75 Z" fill="#3f9e59"/><path d="M963.5 30.75 L974.5 37.5 L974.5 49 L963.5 42.25 Z" fill="#8a7a78"/><path d="M985.5 30.75 L974.5 37.5 L974.5 49 L985.5 42.25 Z" fill="#43a868"/><path d="M963.5 30.75 L974.5 37.5 L985.5 30.75 M974.5 37.5 L974.5 49" fill="none" stroke="#000" stroke-width="1.8"/><path d="M938 2 L941 5 M939 16 L942 16 M980 15 L983 15 M981 1 L979 4" stroke="#111" stroke-width="1.8"/></svg>
<div style="left:998px;top:0px;width:64px;height:8px;background:#f5054e;"></div>
<svg style="left:1000px;top:0px" width="62" height="48" viewBox="1000 0 62 48"><rect x="1007.5" y="4" width="44.5" height="15.5" fill="#000"/><rect x="1007.5" y="18" width="30" height="15.5" fill="#000"/><rect x="1009" y="5.5" width="12.5" height="12.5" fill="#1040e0"/><rect x="1024" y="5.5" width="12.5" height="12.5" fill="#33aaf5"/><rect x="1038" y="5.5" width="12.5" height="12.5" fill="#3f9e59"/><rect x="1009" y="20" width="12.5" height="12.5" fill="#f5054e"/><rect x="1024" y="20" width="12.5" height="12.5" fill="#f78a2c"/><path d="M1035.5 35 L1045 24.5 L1055.5 32 L1048 43.5 Z" fill="#fde24a" stroke="#000" stroke-width="1.6" stroke-linejoin="round"/><path d="M1038 40 L1047 46 L1050 43" fill="none" stroke="#6a6a6a" stroke-width="2"/></svg>
<svg style="left:1068px;top:0px" width="64" height="48" viewBox="1068 0 64 48"><circle cx="1082" cy="28" r="6" fill="#000"/><path d="M1073 48 Q1073 35 1082 35 Q1092 35 1092 48 Z" fill="#000"/><circle cx="1117.5" cy="28" r="6" fill="#000"/><path d="M1108 48 Q1108 35 1117.5 35 Q1127 35 1127 48 Z" fill="#000"/><path d="M1084.5 3 Q1084.5 -3 1090 -3 L1112 -3 Q1118 -3 1118 3 L1118 20 Q1118 26 1112 26 L1096 26 L1089 32 L1089 25 Q1084.5 24 1084.5 20 Z" fill="#fbf3f0"/><path d="M1101 2.5 L1111.5 8.17 L1111.5 17.83 L1101 23.5 L1090.5 17.83 L1090.5 8.17 Z" fill="#000" stroke="#000" stroke-width="2.5" stroke-linejoin="round"/><path d="M1101 2.5 L1111.5 8.17 L1101 13.84 L1090.5 8.17 Z" fill="#fde24a"/><path d="M1090.5 8.17 L1101 13.84 L1101 23.5 L1090.5 17.83 Z" fill="#f78a2c"/><path d="M1111.5 8.17 L1101 13.84 L1101 23.5 L1111.5 17.83 Z" fill="#fddc3c"/><path d="M1090.5 8.17 L1101 13.84 L1111.5 8.17 M1101 13.84 L1101 23.5" fill="none" stroke="#000" stroke-width="1.8"/></svg>
<div style="left:1432px;top:16.5px;width:12px;height:13.5px;background:#fdf0e6;border-bottom:1.5px solid #b9a99a;"></div>
<svg style="left:1464px;top:15px" width="18" height="17" viewBox="0 0 18 17" fill="none" stroke="#f4f1ee" stroke-width="2.6"><path d="M2 2 L8 8.5 L2 15"/><path d="M9 2 L15 8.5 L9 15"/></svg>
<span class="t" style="left:1490.00px;top:13.42px;font-size:19px;line-height:19px;color:#f4f1ee;font-family:'Liberation Sans', sans-serif;transform:scale(0.8754,1);transform-origin:0 16.08px;">Cubist Bossa</span>
<span class="t" style="left:1798.50px;top:3.92px;font-size:19px;line-height:19px;color:#f4f1ee;font-family:'Liberation Sans', sans-serif;transform:scale(0.8692,1);transform-origin:0 16.08px;">THU 2025.1.23</span>
<span class="t" style="left:1837.50px;top:25.92px;font-size:19px;line-height:19px;color:#f4f1ee;font-family:'Liberation Sans', sans-serif;transform:scale(0.8976,1);transform-origin:0 16.08px;">08:48 PM</span>
</div></body></html>
